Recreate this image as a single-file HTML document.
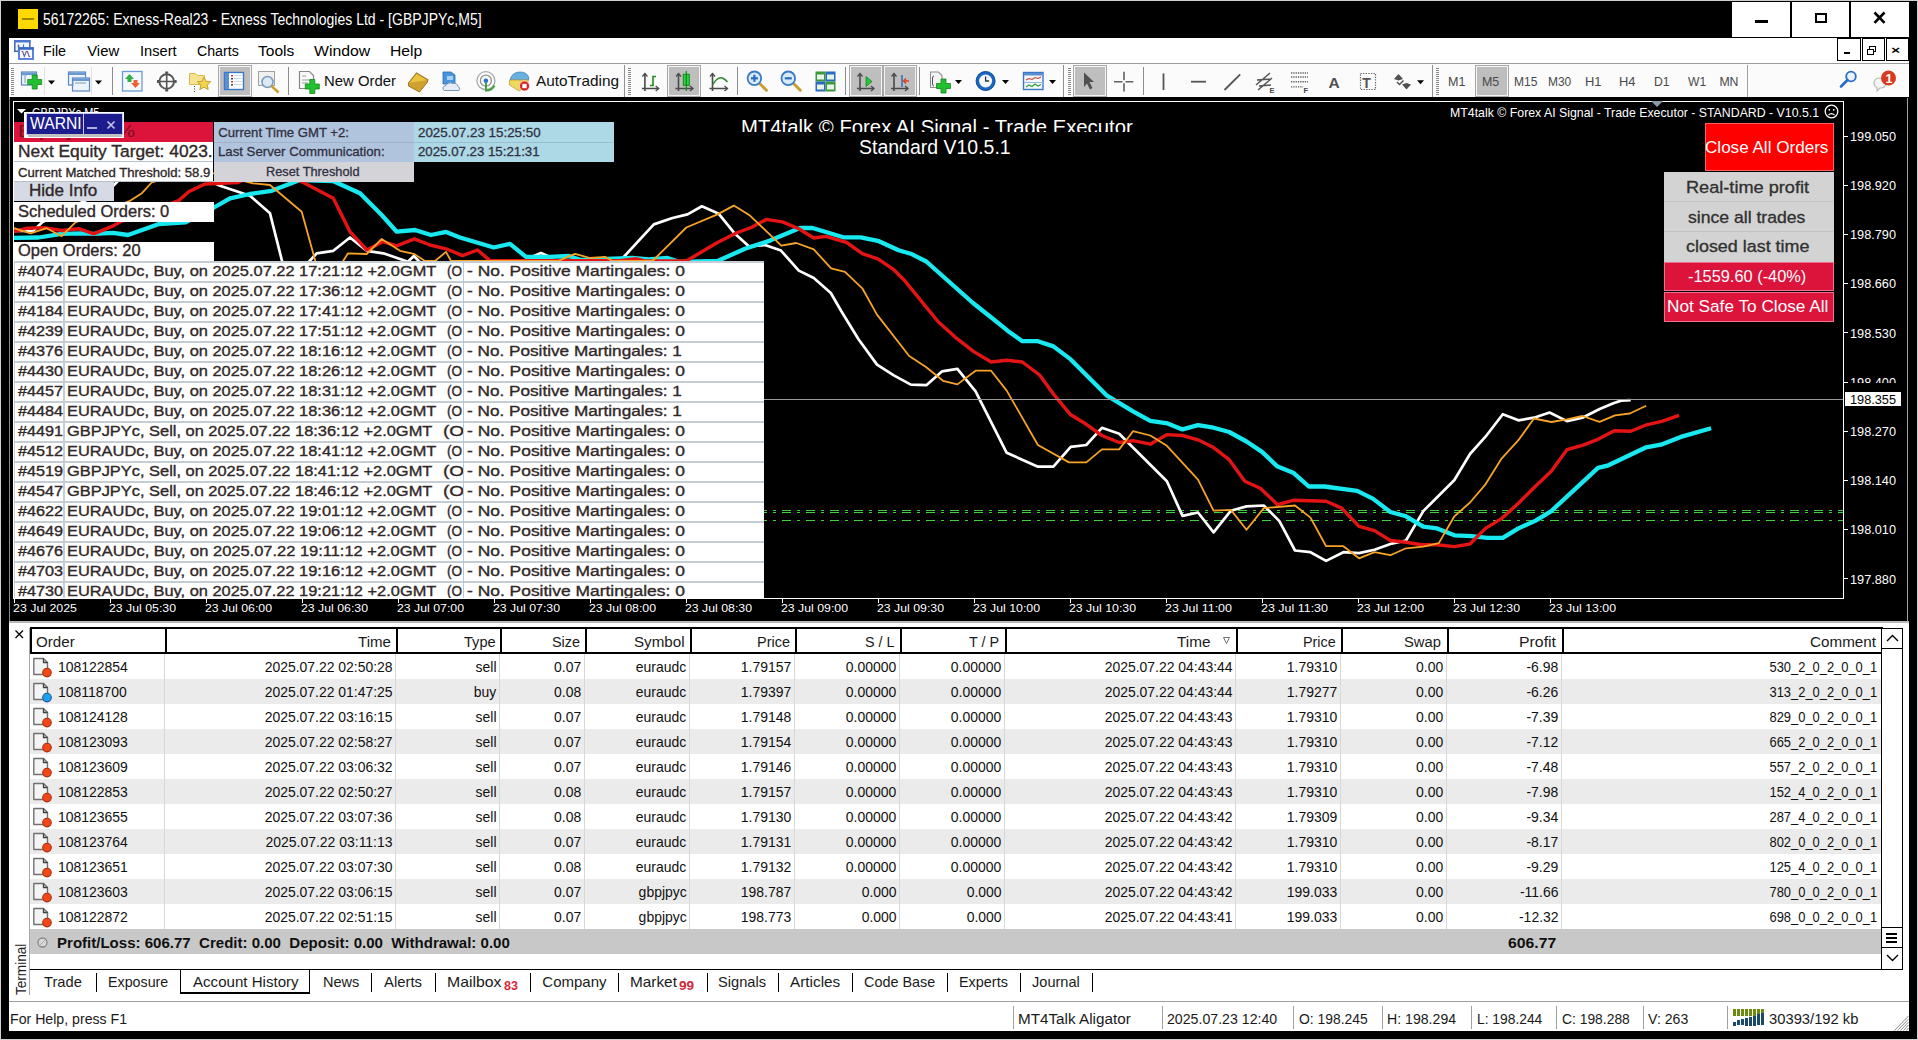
<!DOCTYPE html><html><head><meta charset="utf-8"><style>
*{margin:0;padding:0;box-sizing:border-box}
html,body{width:1918px;height:1040px;overflow:hidden;background:#000;position:relative}
body{font-family:"Liberation Sans",sans-serif;}
div{position:absolute}
.t{white-space:nowrap;line-height:1}
svg{position:absolute;overflow:visible}
</style></head><body>
<div style="left:0px;top:0px;width:1918px;height:1040px;background:#000;border:1px solid #d0d0d0"></div>
<div style="left:18px;top:9px;width:20px;height:20px;background:#ffd800"></div>
<div style="left:22px;top:18px;width:12px;height:2px;background:#9a8400"></div>
<div class="t" style="left:42.8px;top:12.0px;font-size:16.00px;color:#fff;font-weight:normal;font-family:'Liberation Sans';transform:scaleX(0.8765);transform-origin:0 0;">56172265: Exness-Real23 - Exness Technologies Ltd - [GBPJPYc,M5]</div>
<div style="left:1732px;top:2px;width:58px;height:35px;background:#fff"></div>
<div style="left:1792px;top:2px;width:57px;height:35px;background:#fff"></div>
<div style="left:1851px;top:2px;width:58px;height:35px;background:#fff"></div>
<div style="left:1755px;top:20px;width:13px;height:3px;background:#000"></div>
<div style="left:1815px;top:13px;width:12px;height:10px;border:2px solid #000"></div>
<svg style="left:1872px;top:11px" width="16" height="14"><path d="M2.5 1.5 L12.5 11.8 M12.5 1.5 L2.5 11.8" stroke="#000" stroke-width="2.6"/></svg>
<div style="left:9px;top:38px;width:1900px;height:25px;background:#fff"></div>
<div style="left:9px;top:63px;width:1900px;height:1px;background:#9c9c9c"></div>
<svg style="left:0;top:0" width="60" height="64"><rect x="14.8" y="40.8" width="15" height="10.5" fill="#f0f8ff" stroke="#4a6ab0" stroke-width="1.6"/><rect x="14" y="40" width="16.5" height="2.5" fill="#4a78d0"/><path d="M17.5 46 h2 M18.5 44.5 v3 M23.5 44.5 v4 h3" stroke="#4a6ab0" stroke-width="1.2" fill="none"/><rect x="19" y="48" width="14" height="11" fill="#f4faff" stroke="#4a78d8" stroke-width="1.8"/><rect x="18.3" y="47.3" width="15.5" height="2.5" fill="#3a68c8"/><path d="M21.5 51.5 h1.2 l1.6 5 l2 -5 h1.2 l1.6 5 h1" stroke="#6a5a9a" stroke-width="1.1" fill="none"/></svg>
<div class="t" style="left:42.9px;top:44.0px;font-size:14.86px;color:#000;font-weight:normal;font-family:'Liberation Sans';transform:scaleX(0.9620);transform-origin:0 0;">File</div>
<div class="t" style="left:87.2px;top:44.0px;font-size:14.86px;color:#000;font-weight:normal;font-family:'Liberation Sans';">View</div>
<div class="t" style="left:139.8px;top:44.0px;font-size:14.86px;color:#000;font-weight:normal;font-family:'Liberation Sans';transform:scaleX(0.9866);transform-origin:0 0;">Insert</div>
<div class="t" style="left:196.7px;top:44.0px;font-size:14.86px;color:#000;font-weight:normal;font-family:'Liberation Sans';transform:scaleX(0.9536);transform-origin:0 0;">Charts</div>
<div class="t" style="left:258.2px;top:44.0px;font-size:14.86px;color:#000;font-weight:normal;font-family:'Liberation Sans';transform:scaleX(1.0443);transform-origin:0 0;">Tools</div>
<div class="t" style="left:314.2px;top:44.0px;font-size:14.86px;color:#000;font-weight:normal;font-family:'Liberation Sans';transform:scaleX(1.0644);transform-origin:0 0;">Window</div>
<div class="t" style="left:390.2px;top:44.0px;font-size:14.86px;color:#000;font-weight:normal;font-family:'Liberation Sans';transform:scaleX(1.0554);transform-origin:0 0;">Help</div>
<div style="left:1837px;top:38px;width:24px;height:23px;background:#fff;border:1px solid #000"></div>
<div style="left:1862px;top:38px;width:23px;height:23px;background:#fff;border:1px solid #000"></div>
<div style="left:1886px;top:38px;width:23px;height:23px;background:#fff;border:1px solid #000"></div>
<div style="left:1844px;top:52px;width:6px;height:2px;background:#000"></div>
<div style="left:1869px;top:46px;width:7px;height:6px;border:1.5px solid #000"></div>
<div style="left:1867px;top:49px;width:7px;height:6px;border:1.5px solid #000;background:#fff"></div>
<div class="t" style="left:1891.2px;top:46.0px;font-size:10.00px;color:#000;font-weight:bold;font-family:'Liberation Sans';transform:scaleX(1.5861);transform-origin:0 0;">×</div>
<div style="left:9px;top:64px;width:1900px;height:33px;background:#fbfbfb"></div>
<svg style="left:0;top:0" width="1918" height="100"><rect x="11" y="68" width="3" height="1" fill="#8a8a8a"/><rect x="11" y="70" width="3" height="1" fill="#8a8a8a"/><rect x="11" y="72" width="3" height="1" fill="#8a8a8a"/><rect x="11" y="74" width="3" height="1" fill="#8a8a8a"/><rect x="11" y="76" width="3" height="1" fill="#8a8a8a"/><rect x="11" y="78" width="3" height="1" fill="#8a8a8a"/><rect x="11" y="80" width="3" height="1" fill="#8a8a8a"/><rect x="11" y="82" width="3" height="1" fill="#8a8a8a"/><rect x="11" y="84" width="3" height="1" fill="#8a8a8a"/><rect x="11" y="86" width="3" height="1" fill="#8a8a8a"/><rect x="11" y="88" width="3" height="1" fill="#8a8a8a"/><rect x="11" y="90" width="3" height="1" fill="#8a8a8a"/><rect x="11" y="92" width="3" height="1" fill="#8a8a8a"/><rect x="11" y="94" width="3" height="1" fill="#8a8a8a"/><rect x="21.5" y="72.0" width="15" height="13" fill="#eef4fc" stroke="#5a88c4" stroke-width="1.2"/><rect x="22" y="72.5" width="14" height="2.5" fill="#6a9ad4"/><path d="M25 74 v9 M23.5 75.5 l1.5 -1.5 l1.5 1.5" stroke="#7a9ac0" fill="none" stroke-width="1"/><path d="M32.2 75 h5 v4.5 h4.5 v5 h-4.5 v4.5 h-5 v-4.5 h-4.5 v-5 h4.5 z" fill="#22c030" stroke="#108a18" stroke-width="0.8"/><rect x="44" y="67" width="1" height="28" fill="#e0e0e0"/><path d="M48 80.5 h7 l-3.5 4 z" fill="#000"/><rect x="68.5" y="72.0" width="17" height="13" fill="#eef4fc" stroke="#5a88c4" stroke-width="1.2"/><rect x="69" y="72.5" width="16" height="2.5" fill="#6a9ad4"/><rect x="72.5" y="78.0" width="17" height="13" fill="#eef4fc" stroke="#5a88c4" stroke-width="1.2"/><rect x="73" y="78.5" width="16" height="2.5" fill="#6a9ad4"/><path d="M75 83 h11 M73 81 v5" stroke="#7a9ac0" stroke-width="1"/><rect x="91" y="67" width="1" height="28" fill="#e0e0e0"/><path d="M95 80.5 h7 l-3.5 4 z" fill="#000"/><rect x="112" y="67" width="1" height="28" fill="#8c8c8c"/><rect x="122.5" y="71.5" width="19.5" height="19.5" fill="#f4f8fc" stroke="#6a9ad4" stroke-width="1.3"/><path d="M125 79 l4.5 -5 l4.5 5 h-2.5 v3 h-4 v-3 z" fill="#30b040"/><path d="M131 83 h2.5 v-3 h4 v3 h2.5 l-4.5 5 z" fill="#f06030"/><circle cx="166.7" cy="81.5" r="7.3" fill="none" stroke="#555" stroke-width="2"/><path d="M166.7 72 v19 M157 81.5 h19.5" stroke="#555" stroke-width="1.6"/><rect x="165.2" y="71.5" width="3" height="2" fill="#555"/><rect x="165.2" y="89.5" width="3" height="2" fill="#555"/><rect x="157" y="80" width="2" height="3" fill="#555"/><rect x="174.5" y="80" width="2" height="3" fill="#555"/><path d="M189.5 73.5 h6 l2 2 h7 v9 h-15 z" fill="#f6e290" stroke="#d8b850" stroke-width="1"/><path d="M204 77 l2 4.3 l4.7 0.5 l-3.5 3.2 l1 4.6 l-4.2 -2.4 l-4.2 2.4 l1 -4.6 l-3.5 -3.2 l4.7 -0.5 z" fill="#f2d44a" stroke="#b89a30" stroke-width="0.9"/><path d="M194.5 86 v6" stroke="#444" stroke-width="1" stroke-dasharray="1 1.5"/><rect x="219.5" y="66.5" width="31" height="29" fill="#bebebe" stroke="#f4f4f4" stroke-width="1"/><rect x="218.5" y="65.5" width="33" height="31" fill="none" stroke="#a8a8a8" stroke-width="1"/><rect x="224.5" y="72.5" width="19" height="17" fill="#fff" stroke="#3a78c8" stroke-width="1.4"/><rect x="225" y="73" width="4" height="16" fill="#5a90d0"/><rect x="231" y="75" width="2" height="1.5" fill="#d03030"/><rect x="234" y="75" width="8" height="1" fill="#c8d8ec"/><rect x="231" y="78" width="2" height="1.5" fill="#404040"/><rect x="234" y="78" width="8" height="1" fill="#c8d8ec"/><rect x="231" y="81" width="2" height="1.5" fill="#d03030"/><rect x="234" y="81" width="8" height="1" fill="#c8d8ec"/><rect x="231" y="84" width="2" height="1.5" fill="#404040"/><rect x="234" y="84" width="8" height="1" fill="#c8d8ec"/><rect x="258.5" y="71.5" width="16" height="14" fill="#f0f0f0" stroke="#a0a0a0" stroke-width="1"/><circle cx="267.5" cy="82" r="5.5" fill="#dce8f4" stroke="#7a9ac0" stroke-width="1.5"/><path d="M271.5 86 l7 6.5" stroke="#c8a030" stroke-width="2.5"/><rect x="288" y="67" width="1" height="28" fill="#8c8c8c"/><path d="M299.5 71.5 h10 l4 4 v13 h-14 z" fill="#fafafa" stroke="#888" stroke-width="1.2"/><path d="M302 76 h4 M302 80 h8 M302 83 h6" stroke="#999" stroke-width="1.2"/><path d="M309.8 79.5 h5 v4.5 h4.5 v5 h-4.5 v4.5 h-5 v-4.5 h-4.5 v-5 h4.5 z" fill="#22c030" stroke="#108a18" stroke-width="0.8"/><path d="M408.5 83 l8 -10 l11.5 7 l-8 10.5 z" fill="#e8c440" stroke="#a07820" stroke-width="1.1"/><path d="M408.5 83 l0 3 l11 6 l8 -10 l0 -2" fill="#d0a030" stroke="#a07820" stroke-width="1"/><path d="M443 72 h8 l4 3 v9 h-12 z" fill="#4a94dc" stroke="#2a6ab0" stroke-width="0.8"/><rect x="447" y="76" width="6" height="4" fill="#a8d0f4"/><path d="M444 90.5 q-3 -4 2 -5 q2 -4 7 -2 q4 -1 5 3 q3 1 1 4 z" fill="#e4ecf4" stroke="#7a98b8" stroke-width="1"/><circle cx="485.9" cy="80.7" r="9" fill="none" stroke="#a8a8a8" stroke-width="1.3"/><circle cx="485.9" cy="80.7" r="5.5" fill="none" stroke="#909090" stroke-width="1.3"/><circle cx="485.9" cy="80.7" r="2.3" fill="#2a70c8"/><path d="M486 83 v7.5 q6 0 8.5 -5" fill="none" stroke="#40a040" stroke-width="2"/><path d="M510 80 q2 -8 10 -8 q8 0 9 7 l-1 1 z" fill="#6ab0e0" stroke="#3a80b8" stroke-width="0.8"/><path d="M509.5 80 h19 l-3 7 l-6.5 4 l-9.5 -6 z" fill="#f0d860" stroke="#c0a030" stroke-width="0.8"/><circle cx="524.5" cy="86" r="5" fill="#d82020" stroke="#fff" stroke-width="0.6"/><rect x="522.3" y="83.8" width="4.4" height="4.4" fill="#fff"/><rect x="624" y="65" width="1" height="32" fill="#909090"/><rect x="628" y="68" width="3" height="1" fill="#8a8a8a"/><rect x="628" y="70" width="3" height="1" fill="#8a8a8a"/><rect x="628" y="72" width="3" height="1" fill="#8a8a8a"/><rect x="628" y="74" width="3" height="1" fill="#8a8a8a"/><rect x="628" y="76" width="3" height="1" fill="#8a8a8a"/><rect x="628" y="78" width="3" height="1" fill="#8a8a8a"/><rect x="628" y="80" width="3" height="1" fill="#8a8a8a"/><rect x="628" y="82" width="3" height="1" fill="#8a8a8a"/><rect x="628" y="84" width="3" height="1" fill="#8a8a8a"/><rect x="628" y="86" width="3" height="1" fill="#8a8a8a"/><rect x="628" y="88" width="3" height="1" fill="#8a8a8a"/><rect x="628" y="90" width="3" height="1" fill="#8a8a8a"/><rect x="628" y="92" width="3" height="1" fill="#8a8a8a"/><rect x="628" y="94" width="3" height="1" fill="#8a8a8a"/><path d="M644.9 73.5 v17.5 M641.9 88.5 h16.800000000000068" stroke="#4a4a4a" stroke-width="1.6" fill="none"/><path d="M642.4 76.5 l2.5 -3 l2.5 3 M655.7 86 l3 2.5 l-3 2.5" stroke="#4a4a4a" stroke-width="1.3" fill="none"/><path d="M650 85.5 h3 v-9 h3" stroke="#208a20" stroke-width="1.6" fill="none"/><rect x="668.5" y="66.5" width="31" height="29" fill="#bebebe" stroke="#f4f4f4" stroke-width="1"/><rect x="667.5" y="65.5" width="33" height="31" fill="none" stroke="#a8a8a8" stroke-width="1"/><path d="M678.5 73.5 v17.5 M675.5 88.5 h17.5" stroke="#4a4a4a" stroke-width="1.6" fill="none"/><path d="M676.0 76.5 l2.5 -3 l2.5 3 M690 86 l3 2.5 l-3 2.5" stroke="#4a4a4a" stroke-width="1.3" fill="none"/><rect x="683.3" y="74.3" width="6" height="11" fill="#30d040" stroke="#108a18" stroke-width="1"/><path d="M686.3 71 v20" stroke="#108a18" stroke-width="1.2"/><path d="M712.5 73.5 v17.5 M709.5 88.5 h18.0" stroke="#4a4a4a" stroke-width="1.6" fill="none"/><path d="M710.0 76.5 l2.5 -3 l2.5 3 M724.5 86 l3 2.5 l-3 2.5" stroke="#4a4a4a" stroke-width="1.3" fill="none"/><path d="M712.5 85 q5 -9 10 -7 q3 1.5 5 4" stroke="#308a30" stroke-width="1.5" fill="none"/><rect x="737" y="67" width="1" height="28" fill="#8c8c8c"/><path d="M759.4 83.3 l7 7" stroke="#c8a030" stroke-width="3" stroke-linecap="round"/><circle cx="754.4" cy="78.3" r="6.8" fill="#d8ecfc" stroke="#3a7ac8" stroke-width="1.8"/><path d="M750.9 78.3 h7" stroke="#2a6ab8" stroke-width="2.2"/><path d="M754.4 74.8 v7" stroke="#2a6ab8" stroke-width="2.2"/><path d="M793.3 83.3 l7 7" stroke="#c8a030" stroke-width="3" stroke-linecap="round"/><circle cx="788.3" cy="78.3" r="6.8" fill="#d8ecfc" stroke="#3a7ac8" stroke-width="1.8"/><path d="M784.8 78.3 h7" stroke="#2a6ab8" stroke-width="2.2"/><rect x="815.5" y="71.5" width="10" height="10" fill="#3a9a3a"/><rect x="817.0" y="74.5" width="7" height="5" fill="#e8f4e8"/><rect x="825.5" y="71.5" width="10" height="10" fill="#2a6ac0"/><rect x="827.0" y="74.5" width="7" height="5" fill="#e8f4e8"/><rect x="815.5" y="81.5" width="10" height="10" fill="#2a6ac0"/><rect x="817.0" y="84.5" width="7" height="5" fill="#e8f4e8"/><rect x="825.5" y="81.5" width="10" height="10" fill="#3a9a3a"/><rect x="827.0" y="84.5" width="7" height="5" fill="#e8f4e8"/><rect x="845" y="67" width="1" height="28" fill="#8c8c8c"/><rect x="850.5" y="66.5" width="31" height="29" fill="#bebebe" stroke="#f4f4f4" stroke-width="1"/><rect x="849.5" y="65.5" width="33" height="31" fill="none" stroke="#a8a8a8" stroke-width="1"/><path d="M860 73.5 v17.5 M857 88.5 h17" stroke="#4a4a4a" stroke-width="1.6" fill="none"/><path d="M857.5 76.5 l2.5 -3 l2.5 3 M871 86 l3 2.5 l-3 2.5" stroke="#4a4a4a" stroke-width="1.3" fill="none"/><path d="M866 76.5 l6 5 l-6 5 z" fill="#30c040" stroke="#108a18" stroke-width="0.8"/><rect x="884.5" y="66.5" width="31" height="29" fill="#bebebe" stroke="#f4f4f4" stroke-width="1"/><rect x="883.5" y="65.5" width="33" height="31" fill="none" stroke="#a8a8a8" stroke-width="1"/><path d="M894 73.5 v17.5 M891 88.5 h17" stroke="#4a4a4a" stroke-width="1.6" fill="none"/><path d="M891.5 76.5 l2.5 -3 l2.5 3 M905 86 l3 2.5 l-3 2.5" stroke="#4a4a4a" stroke-width="1.3" fill="none"/><path d="M902 75 v12" stroke="#2a70c0" stroke-width="1.5"/><path d="M909 81 h-5 M906 78.5 l-2.5 2.5 l2.5 2.5" stroke="#e04020" stroke-width="1.5" fill="none"/><rect x="919" y="67" width="1" height="28" fill="#8c8c8c"/><path d="M930.5 72 h8 l3.5 3.5 v12 h-11.5 z" fill="#f4f4f4" stroke="#909090" stroke-width="1.1"/><path d="M934 76 q-1.5 0 -1.5 2 v6 q0 2 1.5 2" stroke="#555" stroke-width="1" fill="none"/><path d="M941.0 79 h5 v4.5 h4.5 v5 h-4.5 v4.5 h-5 v-4.5 h-4.5 v-5 h4.5 z" fill="#22c030" stroke="#108a18" stroke-width="0.8"/><path d="M955 80 h7 l-3.5 4 z" fill="#000"/><circle cx="985.6" cy="81" r="9.5" fill="#1a66c0" stroke="#0a4a98" stroke-width="1"/><circle cx="985.6" cy="81" r="6.5" fill="#f4f8fc"/><path d="M985.6 76.5 v4.5 h3.5" stroke="#333" stroke-width="1.3" fill="none"/><path d="M1002 80 h7 l-3.5 4 z" fill="#000"/><rect x="1023.5" y="72.5" width="19.5" height="17" fill="#f4f8fc" stroke="#3a78c8" stroke-width="1.4"/><rect x="1024" y="73" width="19" height="2.5" fill="#5a90d0"/><path d="M1026 80 l3 -1.5 l3 1 l3 -2 l3 1 l3 -1.5" stroke="#c04020" fill="none" stroke-width="1.1"/><path d="M1024 82.5 h19" stroke="#9ab8dc"/><path d="M1026 87 l3 -2 l3 1.5 l3 -2.5 l3 2 l3 -1.5" stroke="#30a030" fill="none" stroke-width="1.1"/><path d="M1049 80 h7 l-3.5 4 z" fill="#000"/><rect x="1063" y="65" width="1" height="32" fill="#909090"/><rect x="1068" y="68" width="3" height="1" fill="#8a8a8a"/><rect x="1068" y="70" width="3" height="1" fill="#8a8a8a"/><rect x="1068" y="72" width="3" height="1" fill="#8a8a8a"/><rect x="1068" y="74" width="3" height="1" fill="#8a8a8a"/><rect x="1068" y="76" width="3" height="1" fill="#8a8a8a"/><rect x="1068" y="78" width="3" height="1" fill="#8a8a8a"/><rect x="1068" y="80" width="3" height="1" fill="#8a8a8a"/><rect x="1068" y="82" width="3" height="1" fill="#8a8a8a"/><rect x="1068" y="84" width="3" height="1" fill="#8a8a8a"/><rect x="1068" y="86" width="3" height="1" fill="#8a8a8a"/><rect x="1068" y="88" width="3" height="1" fill="#8a8a8a"/><rect x="1068" y="90" width="3" height="1" fill="#8a8a8a"/><rect x="1068" y="92" width="3" height="1" fill="#8a8a8a"/><rect x="1068" y="94" width="3" height="1" fill="#8a8a8a"/><rect x="1074.5" y="66.5" width="31" height="29" fill="#bebebe" stroke="#f4f4f4" stroke-width="1"/><rect x="1073.5" y="65.5" width="33" height="31" fill="none" stroke="#a8a8a8" stroke-width="1"/><path d="M1084 72.5 l10 9.5 h-4.5 l3 6 l-2.5 1.5 l-3 -6 l-3 3.5 z" fill="#505050"/><path d="M1124 71.8 v19.8 M1114 81.7 h19.3" stroke="#606060" stroke-width="1.6"/><rect x="1122.5" y="80.2" width="3" height="3" fill="#fbfbfb"/><rect x="1143" y="67" width="1" height="28" fill="#8c8c8c"/><path d="M1163.5 73.4 v16.6" stroke="#555" stroke-width="1.8"/><path d="M1191 81.7 h15" stroke="#555" stroke-width="1.8"/><path d="M1224.5 90 l15.7 -15.6" stroke="#555" stroke-width="1.8"/><path d="M1256 85 l14 -12 M1258 90 l14 -12 M1257 80 l14 -1 M1259 86 l12 -1" stroke="#555" stroke-width="1.5"/><text x="1269.5" y="92.5" font-family="Liberation Sans" font-weight="bold" font-size="7.5" fill="#444">E</text><path d="M1291 73 h17" stroke="#606060" stroke-width="1.4" stroke-dasharray="1.3 1"/><path d="M1291 77 h17" stroke="#606060" stroke-width="1.4" stroke-dasharray="1.3 1"/><path d="M1291 81.7 h17" stroke="#606060" stroke-width="1.4" stroke-dasharray="1.3 1"/><path d="M1291 86.9 h12" stroke="#606060" stroke-width="1.4" stroke-dasharray="1.3 1"/><text x="1303.5" y="92.5" font-family="Liberation Sans" font-weight="bold" font-size="7.5" fill="#444">F</text><text x="1328.5" y="87.5" font-family="Liberation Sans" font-weight="bold" font-size="15.5" fill="#505050">A</text><rect x="1360.5" y="73.5" width="15" height="16" fill="none" stroke="#606060" stroke-width="1.2" stroke-dasharray="1.3 1.3"/><text x="1362.3" y="87.5" font-family="Liberation Sans" font-weight="bold" font-size="14" fill="#555">T</text><path d="M1394 79 l4.5 -5 l4.5 5 l-4.5 1.5 z" fill="#505050"/><path d="M1402 84.5 l4.5 5 l4.5 -5 l-4.5 -1.5 z" fill="#505050"/><path d="M1397 82 l2.5 2.5 l4 -4" stroke="#505050" stroke-width="1.5" fill="none"/><path d="M1417 80.2 h7 l-3.5 4 z" fill="#000"/><rect x="1432" y="65" width="1" height="32" fill="#909090"/><rect x="1436" y="68" width="3" height="1" fill="#8a8a8a"/><rect x="1436" y="70" width="3" height="1" fill="#8a8a8a"/><rect x="1436" y="72" width="3" height="1" fill="#8a8a8a"/><rect x="1436" y="74" width="3" height="1" fill="#8a8a8a"/><rect x="1436" y="76" width="3" height="1" fill="#8a8a8a"/><rect x="1436" y="78" width="3" height="1" fill="#8a8a8a"/><rect x="1436" y="80" width="3" height="1" fill="#8a8a8a"/><rect x="1436" y="82" width="3" height="1" fill="#8a8a8a"/><rect x="1436" y="84" width="3" height="1" fill="#8a8a8a"/><rect x="1436" y="86" width="3" height="1" fill="#8a8a8a"/><rect x="1436" y="88" width="3" height="1" fill="#8a8a8a"/><rect x="1436" y="90" width="3" height="1" fill="#8a8a8a"/><rect x="1436" y="92" width="3" height="1" fill="#8a8a8a"/><rect x="1436" y="94" width="3" height="1" fill="#8a8a8a"/><rect x="1476.5" y="66.5" width="31" height="29" fill="#bebebe" stroke="#f4f4f4" stroke-width="1"/><rect x="1475.5" y="65.5" width="33" height="31" fill="none" stroke="#a8a8a8" stroke-width="1"/><rect x="1747" y="65" width="1" height="32" fill="#a0a0a0"/><circle cx="1851" cy="76.5" r="4.8" fill="#eaf2fc" stroke="#2a6ac8" stroke-width="1.8"/><path d="M1847.5 80 l-6.5 6.5" stroke="#2a6ac8" stroke-width="2.6" stroke-linecap="round"/><path d="M1874 83 q0 -5 6 -5 q6 0 6 5 q0 5 -6 5 l-3 3 v-3.5 q-3 -1 -3 -4.5z" fill="#f4f4f4" stroke="#b8b8b8" stroke-width="1.1"/><circle cx="1888.5" cy="78" r="7.5" fill="#d83a20"/><text x="1885.5" y="83" font-family="Liberation Sans" font-weight="bold" font-size="12.5" fill="#fff">1</text></svg>
<div class="t" style="left:323.9px;top:73.0px;font-size:15.00px;color:#101010;font-weight:normal;font-family:'Liberation Sans';transform:scaleX(0.9926);transform-origin:0 0;">New Order</div>
<div class="t" style="left:535.7px;top:73.0px;font-size:15.00px;color:#101010;font-weight:normal;font-family:'Liberation Sans';transform:scaleX(1.0229);transform-origin:0 0;">AutoTrading</div>
<div class="t" style="left:1448.3px;top:76.0px;font-size:12.29px;color:#4a4a4a;font-weight:normal;font-family:'Liberation Sans';transform:scaleX(1.0199);transform-origin:0 0;">M1</div>
<div class="t" style="left:1481.9px;top:76.0px;font-size:12.29px;color:#4a4a4a;font-weight:normal;font-family:'Liberation Sans';transform:scaleX(1.0137);transform-origin:0 0;">M5</div>
<div class="t" style="left:1513.7px;top:76.0px;font-size:12.29px;color:#4a4a4a;font-weight:normal;font-family:'Liberation Sans';transform:scaleX(0.9772);transform-origin:0 0;">M15</div>
<div class="t" style="left:1548.2px;top:76.0px;font-size:12.29px;color:#4a4a4a;font-weight:normal;font-family:'Liberation Sans';transform:scaleX(0.9728);transform-origin:0 0;">M30</div>
<div class="t" style="left:1585.2px;top:76.0px;font-size:12.29px;color:#4a4a4a;font-weight:normal;font-family:'Liberation Sans';transform:scaleX(1.0530);transform-origin:0 0;">H1</div>
<div class="t" style="left:1618.7px;top:76.0px;font-size:12.29px;color:#4a4a4a;font-weight:normal;font-family:'Liberation Sans';transform:scaleX(1.0530);transform-origin:0 0;">H4</div>
<div class="t" style="left:1654.0px;top:76.0px;font-size:12.29px;color:#4a4a4a;font-weight:normal;font-family:'Liberation Sans';transform:scaleX(0.9918);transform-origin:0 0;">D1</div>
<div class="t" style="left:1687.6px;top:76.0px;font-size:12.29px;color:#4a4a4a;font-weight:normal;font-family:'Liberation Sans';transform:scaleX(0.9863);transform-origin:0 0;">W1</div>
<div class="t" style="left:1719.4px;top:76.0px;font-size:12.29px;color:#4a4a4a;font-weight:normal;font-family:'Liberation Sans';">MN</div>
<div style="left:9px;top:97px;width:1900px;height:524px;background:#000"></div>
<div style="left:9px;top:97px;width:1px;height:524px;background:#8a8a8a"></div>
<div style="left:1907px;top:98px;width:1px;height:523px;background:#a0a0a0"></div>
<div style="left:9px;top:621px;width:1900px;height:2px;background:#b8b8b8"></div>
<div style="left:13px;top:101px;width:1831px;height:498px;border:1px solid #fff;border-right:none"></div>
<div style="left:1843px;top:101px;width:1px;height:498px;background:#fff"></div>
<svg style="left:0;top:0" width="1918" height="1040"><line x1="764" y1="510.5" x2="1843" y2="510.5" stroke="#3cd23c" stroke-width="1" stroke-dasharray="9 6 3 6" stroke-dashoffset="6"/><line x1="764" y1="512.5" x2="1843" y2="512.5" stroke="#3cd23c" stroke-width="1" stroke-dasharray="9 6 3 6" stroke-dashoffset="6"/><line x1="764" y1="520.5" x2="1843" y2="520.5" stroke="#3cd23c" stroke-width="1" stroke-dasharray="9 6 3 6" stroke-dashoffset="6"/><polyline points="14.0,231.0 33.0,231.0 42.0,222.4 112.0,187.0 120.0,179.0 205.0,177.0 214.0,183.0 220.0,185.8 250.0,195.8 270.0,213.3 283.3,266.0 305.0,266.0 316.7,253.3 333.3,250.8 350.0,237.5 366.7,250.8 383.3,253.3 408.0,261.7 413.8,256.0 418.8,261.0 425.0,266.0 527.0,266.0 533.8,256.0 541.0,253.0 550.0,257.0 557.0,266.0 614.0,266.0 620.0,261.0 653.8,224.4 672.5,218.0 687.5,214.4 701.9,206.3 718.8,213.8 735.0,233.8 748.8,246.3 765.0,245.0 781.0,250.6 798.8,270.6 813.8,278.0 830.8,293.0 841.5,311.5 858.5,339.2 877.0,364.6 893.8,375.4 910.8,384.6 926.3,385.2 941.9,371.4 957.4,368.8 975.6,391.4 1006.7,452.8 1037.9,466.7 1053.4,466.7 1070.7,446.8 1086.3,445.0 1101.9,427.8 1119.2,433.8 1166.9,481.3 1182.5,515.9 1198.0,512.5 1213.6,532.4 1230.9,510.7 1246.5,506.4 1263.8,505.5 1279.4,521.1 1295.0,550.5 1310.5,552.2 1326.1,560.9 1343.4,552.2 1359.0,553.1 1374.5,549.7 1391.8,543.6 1406.0,540.5 1423.3,511.1 1454.4,480.0 1470.0,454.0 1485.5,436.7 1502.8,414.2 1518.4,420.3 1534.0,417.7 1549.6,412.5 1566.9,421.1 1582.4,417.7 1599.7,409.0 1613.4,403.2 1621.1,400.6 1630.7,400.1" fill="none" stroke="#ffffff" stroke-width="2.7" stroke-linejoin="round"/><polyline points="14.0,237.9 38.7,237.5 61.6,233.9 81.0,233.3 93.7,233.9 113.0,232.8 128.0,235.0 159.0,224.0 185.5,222.4 214.0,207.5 230.0,198.3 250.0,194.0 271.7,190.8 286.7,185.0 300.0,180.0 333.0,181.0 360.0,193.3 381.7,215.0 396.7,231.7 415.0,230.0 431.0,235.0 446.0,231.9 460.0,237.5 493.8,247.5 510.0,243.8 526.0,256.9 550.0,256.9 568.8,256.0 581.0,260.0 632.5,258.0 648.8,259.4 667.5,258.0 680.0,262.0 717.5,261.0 745.0,248.8 770.0,240.6 800.0,228.0 812.5,228.0 843.3,237.3 860.6,237.3 877.9,240.8 898.6,250.3 910.7,253.7 926.3,261.5 973.0,303.0 993.8,319.5 1007.6,330.7 1022.3,341.2 1037.9,341.2 1053.4,346.4 1070.7,359.4 1107.0,395.7 1133.0,411.3 1150.3,420.8 1167.6,423.4 1182.5,429.4 1198.0,425.1 1213.6,427.7 1229.2,432.0 1246.5,441.5 1262.0,451.9 1277.6,466.6 1293.2,472.7 1308.8,486.5 1324.4,486.5 1357.2,490.8 1372.8,498.6 1390.4,512.0 1406.0,516.3 1423.3,526.7 1437.1,528.4 1454.4,535.3 1471.7,536.2 1487.3,537.9 1502.8,537.9 1518.4,528.4 1535.7,520.6 1551.3,511.1 1598.0,467.9 1608.4,465.3 1646.2,447.3 1660.9,444.7 1680.8,436.9 1711.1,428.3" fill="none" stroke="#18e8f0" stroke-width="4.3" stroke-linejoin="round"/><polyline points="14.0,231.6 27.2,228.2 44.4,227.6 61.6,230.5 78.8,228.7 93.7,233.9 113.2,225.9 120.0,222.0 178.6,200.6 189.0,191.5 205.0,184.0 238.0,182.5 250.0,177.0 290.0,177.0 303.3,182.5 333.3,198.3 350.0,231.7 366.7,250.0 383.0,241.7 396.7,245.8 414.4,238.8 430.0,245.0 446.0,248.8 462.5,255.6 477.5,250.0 490.0,260.6 521.0,260.6 620.0,260.6 636.3,258.8 645.0,261.0 686.3,261.0 717.5,242.5 736.3,233.0 751.3,227.5 766.3,219.4 782.5,221.9 798.8,228.8 813.8,238.0 826.0,236.4 846.7,242.5 862.3,253.7 877.9,258.9 893.4,269.3 903.8,279.7 938.4,322.0 955.7,337.6 973.8,351.6 991.1,362.0 1006.7,360.3 1022.3,362.0 1039.6,375.0 1053.4,394.0 1070.7,414.8 1086.3,424.3 1101.9,435.5 1119.2,442.5 1133.0,440.7 1150.3,444.2 1166.9,434.6 1182.5,435.5 1198.0,439.8 1213.6,447.6 1229.2,459.7 1244.8,481.3 1260.3,488.2 1277.6,504.7 1293.2,500.3 1326.1,501.2 1341.7,508.1 1359.0,526.3 1374.5,530.6 1390.4,540.5 1406.0,542.2 1421.5,544.8 1437.1,544.8 1454.4,546.6 1470.0,544.0 1485.5,528.4 1501.1,518.9 1518.4,503.3 1535.7,486.0 1551.3,471.3 1566.9,449.7 1582.4,445.4 1598.0,439.3 1614.2,430.8 1630.7,431.3 1645.4,425.2 1661.8,421.3 1679.1,415.3" fill="none" stroke="#e41414" stroke-width="3.4" stroke-linejoin="round"/><polyline points="14.0,228.2 30.6,233.3 46.7,228.2 61.6,236.2 75.4,222.4 129.3,201.2 141.9,193.2 151.7,182.5 200.0,170.0 253.0,183.3 270.0,185.0 301.7,211.7 316.7,266.0 340.0,266.0 348.0,253.3 366.7,254.0 381.7,239.0 400.0,250.8 413.8,253.8 425.0,261.0 435.0,261.0 446.0,251.9 451.0,261.0 558.8,260.6 575.0,253.8 590.0,258.0 605.0,256.9 612.5,261.0 652.5,261.0 686.3,227.5 717.5,214.4 733.8,205.6 750.0,215.6 781.3,245.6 796.3,243.0 813.8,249.4 831.1,268.4 845.0,271.9 862.3,288.3 877.0,314.6 909.2,356.0 926.0,367.0 943.0,380.8 957.4,384.4 975.6,370.7 991.1,370.7 1006.7,390.6 1037.9,445.0 1069.0,462.4 1086.3,462.4 1101.9,449.4 1119.2,449.4 1133.0,431.2 1150.3,435.5 1166.9,445.8 1198.0,479.6 1213.6,510.7 1230.9,509.9 1246.5,529.8 1263.8,508.1 1295.0,505.5 1310.5,517.6 1326.1,546.2 1343.4,546.2 1359.0,558.3 1374.5,552.2 1390.4,555.2 1406.0,548.3 1423.3,546.6 1438.8,543.1 1454.4,516.3 1470.0,502.5 1485.5,484.3 1501.1,459.2 1518.4,440.2 1534.0,418.5 1551.3,422.0 1566.9,419.4 1582.4,416.0 1599.5,421.8 1615.1,415.3 1629.8,413.5 1646.2,405.8" fill="none" stroke="#f6a326" stroke-width="1.8" stroke-linejoin="round"/></svg>
<div style="left:14px;top:598px;width:1px;height:5px;background:#fff"></div>
<div class="t" style="left:12.9px;top:603.0px;font-size:11.57px;color:#fff;font-weight:normal;font-family:'Liberation Sans';transform:scaleX(1.0701);transform-origin:0 0;">23 Jul 2025</div>
<div style="left:110px;top:598px;width:1px;height:5px;background:#fff"></div>
<div class="t" style="left:108.9px;top:603.0px;font-size:11.57px;color:#fff;font-weight:normal;font-family:'Liberation Sans';transform:scaleX(1.0630);transform-origin:0 0;">23 Jul 05:30</div>
<div style="left:206px;top:598px;width:1px;height:5px;background:#fff"></div>
<div class="t" style="left:204.9px;top:603.0px;font-size:11.57px;color:#fff;font-weight:normal;font-family:'Liberation Sans';transform:scaleX(1.0630);transform-origin:0 0;">23 Jul 06:00</div>
<div style="left:302px;top:598px;width:1px;height:5px;background:#fff"></div>
<div class="t" style="left:300.9px;top:603.0px;font-size:11.57px;color:#fff;font-weight:normal;font-family:'Liberation Sans';transform:scaleX(1.0630);transform-origin:0 0;">23 Jul 06:30</div>
<div style="left:398px;top:598px;width:1px;height:5px;background:#fff"></div>
<div class="t" style="left:396.9px;top:603.0px;font-size:11.57px;color:#fff;font-weight:normal;font-family:'Liberation Sans';transform:scaleX(1.0630);transform-origin:0 0;">23 Jul 07:00</div>
<div style="left:494px;top:598px;width:1px;height:5px;background:#fff"></div>
<div class="t" style="left:492.9px;top:603.0px;font-size:11.57px;color:#fff;font-weight:normal;font-family:'Liberation Sans';transform:scaleX(1.0630);transform-origin:0 0;">23 Jul 07:30</div>
<div style="left:590px;top:598px;width:1px;height:5px;background:#fff"></div>
<div class="t" style="left:588.9px;top:603.0px;font-size:11.57px;color:#fff;font-weight:normal;font-family:'Liberation Sans';transform:scaleX(1.0630);transform-origin:0 0;">23 Jul 08:00</div>
<div style="left:686px;top:598px;width:1px;height:5px;background:#fff"></div>
<div class="t" style="left:684.9px;top:603.0px;font-size:11.57px;color:#fff;font-weight:normal;font-family:'Liberation Sans';transform:scaleX(1.0630);transform-origin:0 0;">23 Jul 08:30</div>
<div style="left:782px;top:598px;width:1px;height:5px;background:#fff"></div>
<div class="t" style="left:780.9px;top:603.0px;font-size:11.57px;color:#fff;font-weight:normal;font-family:'Liberation Sans';transform:scaleX(1.0630);transform-origin:0 0;">23 Jul 09:00</div>
<div style="left:878px;top:598px;width:1px;height:5px;background:#fff"></div>
<div class="t" style="left:876.9px;top:603.0px;font-size:11.57px;color:#fff;font-weight:normal;font-family:'Liberation Sans';transform:scaleX(1.0630);transform-origin:0 0;">23 Jul 09:30</div>
<div style="left:974px;top:598px;width:1px;height:5px;background:#fff"></div>
<div class="t" style="left:972.9px;top:603.0px;font-size:11.57px;color:#fff;font-weight:normal;font-family:'Liberation Sans';transform:scaleX(1.0630);transform-origin:0 0;">23 Jul 10:00</div>
<div style="left:1070px;top:598px;width:1px;height:5px;background:#fff"></div>
<div class="t" style="left:1068.9px;top:603.0px;font-size:11.57px;color:#fff;font-weight:normal;font-family:'Liberation Sans';transform:scaleX(1.0630);transform-origin:0 0;">23 Jul 10:30</div>
<div style="left:1166px;top:598px;width:1px;height:5px;background:#fff"></div>
<div class="t" style="left:1164.9px;top:603.0px;font-size:11.57px;color:#fff;font-weight:normal;font-family:'Liberation Sans';transform:scaleX(1.0779);transform-origin:0 0;">23 Jul 11:00</div>
<div style="left:1262px;top:598px;width:1px;height:5px;background:#fff"></div>
<div class="t" style="left:1260.9px;top:603.0px;font-size:11.57px;color:#fff;font-weight:normal;font-family:'Liberation Sans';transform:scaleX(1.0779);transform-origin:0 0;">23 Jul 11:30</div>
<div style="left:1358px;top:598px;width:1px;height:5px;background:#fff"></div>
<div class="t" style="left:1356.9px;top:603.0px;font-size:11.57px;color:#fff;font-weight:normal;font-family:'Liberation Sans';transform:scaleX(1.0630);transform-origin:0 0;">23 Jul 12:00</div>
<div style="left:1454px;top:598px;width:1px;height:5px;background:#fff"></div>
<div class="t" style="left:1452.9px;top:603.0px;font-size:11.57px;color:#fff;font-weight:normal;font-family:'Liberation Sans';transform:scaleX(1.0630);transform-origin:0 0;">23 Jul 12:30</div>
<div style="left:1550px;top:598px;width:1px;height:5px;background:#fff"></div>
<div class="t" style="left:1548.9px;top:603.0px;font-size:11.57px;color:#fff;font-weight:normal;font-family:'Liberation Sans';transform:scaleX(1.0630);transform-origin:0 0;">23 Jul 13:00</div>
<div style="left:1843px;top:136px;width:5px;height:1px;background:#fff"></div>
<div class="t" style="left:1849.8px;top:132.0px;font-size:11.86px;color:#fff;font-weight:normal;font-family:'Liberation Sans';transform:scaleX(1.0733);transform-origin:0 0;">199.050</div>
<div style="left:1843px;top:185px;width:5px;height:1px;background:#fff"></div>
<div class="t" style="left:1849.8px;top:181.0px;font-size:11.86px;color:#fff;font-weight:normal;font-family:'Liberation Sans';transform:scaleX(1.0733);transform-origin:0 0;">198.920</div>
<div style="left:1843px;top:234px;width:5px;height:1px;background:#fff"></div>
<div class="t" style="left:1849.8px;top:230.0px;font-size:11.86px;color:#fff;font-weight:normal;font-family:'Liberation Sans';transform:scaleX(1.0733);transform-origin:0 0;">198.790</div>
<div style="left:1843px;top:283px;width:5px;height:1px;background:#fff"></div>
<div class="t" style="left:1849.8px;top:279.0px;font-size:11.86px;color:#fff;font-weight:normal;font-family:'Liberation Sans';transform:scaleX(1.0733);transform-origin:0 0;">198.660</div>
<div style="left:1843px;top:332px;width:5px;height:1px;background:#fff"></div>
<div class="t" style="left:1849.8px;top:329.0px;font-size:11.86px;color:#fff;font-weight:normal;font-family:'Liberation Sans';transform:scaleX(1.0733);transform-origin:0 0;">198.530</div>
<div style="left:1843px;top:382px;width:5px;height:1px;background:#fff"></div>
<div class="t" style="left:1849.8px;top:378.0px;font-size:11.86px;color:#fff;font-weight:normal;font-family:'Liberation Sans';transform:scaleX(1.0733);transform-origin:0 0;">198.400</div>
<div style="left:1843px;top:431px;width:5px;height:1px;background:#fff"></div>
<div class="t" style="left:1849.8px;top:427.0px;font-size:11.86px;color:#fff;font-weight:normal;font-family:'Liberation Sans';transform:scaleX(1.0733);transform-origin:0 0;">198.270</div>
<div style="left:1843px;top:480px;width:5px;height:1px;background:#fff"></div>
<div class="t" style="left:1849.8px;top:476.0px;font-size:11.86px;color:#fff;font-weight:normal;font-family:'Liberation Sans';transform:scaleX(1.0733);transform-origin:0 0;">198.140</div>
<div style="left:1843px;top:529px;width:5px;height:1px;background:#fff"></div>
<div class="t" style="left:1849.8px;top:525.0px;font-size:11.86px;color:#fff;font-weight:normal;font-family:'Liberation Sans';transform:scaleX(1.0733);transform-origin:0 0;">198.010</div>
<div style="left:1843px;top:578px;width:5px;height:1px;background:#fff"></div>
<div class="t" style="left:1849.8px;top:575.0px;font-size:11.86px;color:#fff;font-weight:normal;font-family:'Liberation Sans';transform:scaleX(1.0733);transform-origin:0 0;">197.880</div>
<div style="left:1848px;top:383px;width:58px;height:9px;background:#000"></div>
<div style="left:14px;top:399px;width:1829px;height:1px;background:#9a9a9a"></div>
<div style="left:1845px;top:392px;width:56px;height:14px;background:#fff"></div>
<div class="t" style="left:1849.8px;top:395.0px;font-size:11.86px;color:#000;font-weight:normal;font-family:'Liberation Sans';transform:scaleX(1.0733);transform-origin:0 0;">198.355</div>
<div class="t" style="left:1449.7px;top:107.0px;font-size:12.86px;color:#fff;font-weight:normal;font-family:'Liberation Sans';transform:scaleX(0.9583);transform-origin:0 0;">MT4talk © Forex AI Signal - Trade Executor - STANDARD - V10.5.1</div>
<svg style="left:1824px;top:104px" width="16" height="16"><circle cx="7.5" cy="7.5" r="6.3" fill="none" stroke="#fff" stroke-width="1.3"/><circle cx="5.3" cy="5.8" r="0.9" fill="#fff"/><circle cx="9.7" cy="5.8" r="0.9" fill="#fff"/><path d="M4.5 11 Q7.5 8.3 10.5 11" fill="none" stroke="#fff" stroke-width="1.1"/></svg>
<svg style="left:1651px;top:101px" width="14" height="8"><path d="M0 0 L12 0 L6 6 Z" fill="#8a9aaa"/></svg>
<div style="left:700px;top:110px;width:480px;height:21.5px;overflow:hidden">
<div class="t" style="left:40.8px;top:8.0px;font-size:19.29px;color:#fff;font-weight:normal;font-family:'Liberation Sans';transform:scaleX(1.0527);transform-origin:0 0;">MT4talk © Forex AI Signal - Trade Executor</div>
</div>
<div class="t" style="left:859.4px;top:138.0px;font-size:19.29px;color:#fff;font-weight:normal;font-family:'Liberation Sans';transform:scaleX(1.0104);transform-origin:0 0;">Standard V10.5.1</div>
<div style="left:1705px;top:123px;width:129px;height:48px;background:#ff0000;border:1px solid #ff6060"></div>
<div class="t" style="left:1705.1px;top:140.0px;font-size:15.71px;color:#fff;font-weight:normal;font-family:'Liberation Sans';transform:scaleX(1.0874);transform-origin:0 0;">Close All Orders</div>
<div style="left:1664px;top:172px;width:170px;height:90px;background:#d3d3d3"></div>
<div style="left:1664px;top:201px;width:170px;height:1px;background:#c4c4c4"></div>
<div style="left:1664px;top:231px;width:170px;height:1px;background:#c4c4c4"></div>
<div class="t" style="left:1686.3px;top:180.0px;font-size:15.71px;color:#303030;font-weight:normal;font-family:'Liberation Sans';transform:scaleX(1.1558);transform-origin:0 0;-webkit-text-stroke:0.3px #303030">Real-time profit</div>
<div class="t" style="left:1688.1px;top:210.0px;font-size:15.71px;color:#303030;font-weight:normal;font-family:'Liberation Sans';transform:scaleX(1.1209);transform-origin:0 0;-webkit-text-stroke:0.3px #303030">since all trades</div>
<div class="t" style="left:1686.1px;top:239.0px;font-size:15.71px;color:#303030;font-weight:normal;font-family:'Liberation Sans';transform:scaleX(1.1404);transform-origin:0 0;-webkit-text-stroke:0.3px #303030">closed last time</div>
<div style="left:1664px;top:262px;width:170px;height:29px;background:#dc143c;border:1px solid #f07090"></div>
<div class="t" style="left:1688.2px;top:269.0px;font-size:15.71px;color:#fff;font-weight:normal;font-family:'Liberation Sans';transform:scaleX(1.0425);transform-origin:0 0;">-1559.60 (-40%)</div>
<div style="left:1664px;top:292px;width:170px;height:30px;background:#dc143c;border:1px solid #f07090"></div>
<div class="t" style="left:1667.1px;top:299.0px;font-size:15.71px;color:#fff;font-weight:normal;font-family:'Liberation Sans';transform:scaleX(1.0961);transform-origin:0 0;">Not Safe To Close All</div>
<svg style="left:17px;top:109px" width="10" height="5"><path d="M0 0 L9 0 L4.5 4.5 Z" fill="#fff"/></svg>
<div class="t" style="left:32.2px;top:107.0px;font-size:12.14px;color:#fff;font-weight:normal;font-family:'Liberation Sans';transform:scaleX(0.9104);transform-origin:0 0;">GBPJPYc,M5</div>
<div style="left:14px;top:122px;width:199px;height:20px;background:#dc143c"></div>
<div class="t" style="left:17.7px;top:123.0px;font-size:16.43px;color:#7a1020;font-weight:normal;font-family:'Liberation Sans';transform:scaleX(1.2686);transform-origin:0 0;">Equity: 3.8%</div>
<div style="left:14px;top:142px;width:199px;height:20px;background:#fff;border-bottom:1px solid #b8c0c8"></div>
<div class="t" style="left:17.8px;top:143.0px;font-size:16.43px;color:#302828;font-weight:normal;font-family:'Liberation Sans';transform:scaleX(1.0575);transform-origin:0 0;-webkit-text-stroke:0.35px #302828">Next Equity Target: 4023.</div>
<div style="left:14px;top:162px;width:199px;height:20px;background:#fff;border-bottom:1px solid #b8c0c8"></div>
<div class="t" style="left:18.0px;top:166.0px;font-size:13.14px;color:#302828;font-weight:normal;font-family:'Liberation Sans';-webkit-text-stroke:0.35px #302828">Current Matched Threshold: 58.9</div>
<div style="left:14px;top:182px;width:100px;height:19px;background:#d6dae4"></div>
<div class="t" style="left:28.7px;top:182.0px;font-size:16.43px;color:#302828;font-weight:normal;font-family:'Liberation Sans';transform:scaleX(1.0385);transform-origin:0 0;-webkit-text-stroke:0.35px #302828">Hide Info</div>
<div style="left:14px;top:202px;width:200px;height:20px;background:#fff"></div>
<div class="t" style="left:17.9px;top:204.0px;font-size:15.71px;color:#302828;font-weight:normal;font-family:'Liberation Sans';transform:scaleX(1.0499);transform-origin:0 0;-webkit-text-stroke:0.35px #302828">Scheduled Orders: 0</div>
<div style="left:14px;top:242px;width:200px;height:20px;background:#fff"></div>
<div class="t" style="left:17.9px;top:243.0px;font-size:15.71px;color:#302828;font-weight:normal;font-family:'Liberation Sans';transform:scaleX(1.0483);transform-origin:0 0;-webkit-text-stroke:0.35px #302828">Open Orders: 20</div>
<div style="left:214px;top:122px;width:200px;height:20px;background:#b0c4de"></div>
<div style="left:214px;top:142px;width:200px;height:20px;background:#b0c4de;border-top:1px solid #a0b0c8"></div>
<div style="left:414px;top:122px;width:200px;height:20px;background:#add8e6"></div>
<div style="left:414px;top:142px;width:200px;height:20px;background:#add8e6;border-top:1px solid #98c0d0"></div>
<div style="left:214px;top:162px;width:200px;height:20px;background:#d3d3d8"></div>
<div class="t" style="left:218.3px;top:126.0px;font-size:13.14px;color:#303040;font-weight:normal;font-family:'Liberation Sans';-webkit-text-stroke:0.3px #303040">Current Time GMT +2:</div>
<div class="t" style="left:217.8px;top:145.0px;font-size:13.14px;color:#303040;font-weight:normal;font-family:'Liberation Sans';transform:scaleX(1.0058);transform-origin:0 0;-webkit-text-stroke:0.3px #303040">Last Server Communication:</div>
<div class="t" style="left:417.8px;top:126.0px;font-size:13.14px;color:#303040;font-weight:normal;font-family:'Liberation Sans';transform:scaleX(1.0177);transform-origin:0 0;-webkit-text-stroke:0.3px #303040">2025.07.23 15:25:50</div>
<div class="t" style="left:417.8px;top:145.0px;font-size:13.14px;color:#303040;font-weight:normal;font-family:'Liberation Sans';transform:scaleX(1.0093);transform-origin:0 0;-webkit-text-stroke:0.3px #303040">2025.07.23 15:21:31</div>
<div class="t" style="left:265.9px;top:165.0px;font-size:13.14px;color:#303040;font-weight:normal;font-family:'Liberation Sans';transform:scaleX(0.9736);transform-origin:0 0;-webkit-text-stroke:0.3px #303040">Reset Threshold</div>
<div style="left:14px;top:261px;width:750px;height:337px;overflow:hidden">
<div style="left:0px;top:0px;width:750px;height:20px;background:#fff;border-top:2px solid #c4ccd4"></div>
<div style="left:49px;top:0px;width:2px;height:20px;background:#c4ccd6"></div>
<div style="left:449px;top:0px;width:1px;height:20px;background:#b8c8dc"></div>
<div class="t" style="left:3.9px;top:3.0px;font-size:14.29px;color:#302828;font-weight:normal;font-family:'Liberation Sans';transform:scaleX(1.1354);transform-origin:0 0;-webkit-text-stroke:0.35px #302828">#4074</div>
<div style="left:51px;top:0px;width:398px;height:20px;overflow:hidden">
<div class="t" style="left:2.2px;top:3.0px;font-size:14.29px;color:#302828;font-weight:normal;font-family:'Liberation Sans';transform:scaleX(1.1482);transform-origin:0 0;-webkit-text-stroke:0.35px #302828">EURAUDc, Buy, on 2025.07.22 17:21:12 +2.0GMT</div>
<div class="t" style="left:382.3px;top:3.0px;font-size:14.29px;color:#302828;font-weight:normal;font-family:'Liberation Sans';transform:scaleX(0.9503);transform-origin:0 0;-webkit-text-stroke:0.35px #302828">(O</div>
</div>
<div class="t" style="left:452.6px;top:3.0px;font-size:14.29px;color:#302828;font-weight:normal;font-family:'Liberation Sans';transform:scaleX(1.2201);transform-origin:0 0;-webkit-text-stroke:0.35px #302828">- No. Positive Martingales: 0</div>
<div style="left:0px;top:20px;width:750px;height:20px;background:#fff;border-top:2px solid #c4ccd4"></div>
<div style="left:49px;top:20px;width:2px;height:20px;background:#c4ccd6"></div>
<div style="left:449px;top:20px;width:1px;height:20px;background:#b8c8dc"></div>
<div class="t" style="left:3.9px;top:23.0px;font-size:14.29px;color:#302828;font-weight:normal;font-family:'Liberation Sans';transform:scaleX(1.1354);transform-origin:0 0;-webkit-text-stroke:0.35px #302828">#4156</div>
<div style="left:51px;top:20px;width:398px;height:20px;overflow:hidden">
<div class="t" style="left:2.2px;top:3.0px;font-size:14.29px;color:#302828;font-weight:normal;font-family:'Liberation Sans';transform:scaleX(1.1482);transform-origin:0 0;-webkit-text-stroke:0.35px #302828">EURAUDc, Buy, on 2025.07.22 17:36:12 +2.0GMT</div>
<div class="t" style="left:382.3px;top:3.0px;font-size:14.29px;color:#302828;font-weight:normal;font-family:'Liberation Sans';transform:scaleX(0.9503);transform-origin:0 0;-webkit-text-stroke:0.35px #302828">(O</div>
</div>
<div class="t" style="left:452.6px;top:23.0px;font-size:14.29px;color:#302828;font-weight:normal;font-family:'Liberation Sans';transform:scaleX(1.2201);transform-origin:0 0;-webkit-text-stroke:0.35px #302828">- No. Positive Martingales: 0</div>
<div style="left:0px;top:40px;width:750px;height:20px;background:#fff;border-top:2px solid #c4ccd4"></div>
<div style="left:49px;top:40px;width:2px;height:20px;background:#c4ccd6"></div>
<div style="left:449px;top:40px;width:1px;height:20px;background:#b8c8dc"></div>
<div class="t" style="left:3.9px;top:43.0px;font-size:14.29px;color:#302828;font-weight:normal;font-family:'Liberation Sans';transform:scaleX(1.1354);transform-origin:0 0;-webkit-text-stroke:0.35px #302828">#4184</div>
<div style="left:51px;top:40px;width:398px;height:20px;overflow:hidden">
<div class="t" style="left:2.2px;top:3.0px;font-size:14.29px;color:#302828;font-weight:normal;font-family:'Liberation Sans';transform:scaleX(1.1482);transform-origin:0 0;-webkit-text-stroke:0.35px #302828">EURAUDc, Buy, on 2025.07.22 17:41:12 +2.0GMT</div>
<div class="t" style="left:382.3px;top:3.0px;font-size:14.29px;color:#302828;font-weight:normal;font-family:'Liberation Sans';transform:scaleX(0.9503);transform-origin:0 0;-webkit-text-stroke:0.35px #302828">(O</div>
</div>
<div class="t" style="left:452.6px;top:43.0px;font-size:14.29px;color:#302828;font-weight:normal;font-family:'Liberation Sans';transform:scaleX(1.2201);transform-origin:0 0;-webkit-text-stroke:0.35px #302828">- No. Positive Martingales: 0</div>
<div style="left:0px;top:60px;width:750px;height:20px;background:#fff;border-top:2px solid #c4ccd4"></div>
<div style="left:49px;top:60px;width:2px;height:20px;background:#c4ccd6"></div>
<div style="left:449px;top:60px;width:1px;height:20px;background:#b8c8dc"></div>
<div class="t" style="left:3.9px;top:63.0px;font-size:14.29px;color:#302828;font-weight:normal;font-family:'Liberation Sans';transform:scaleX(1.1354);transform-origin:0 0;-webkit-text-stroke:0.35px #302828">#4239</div>
<div style="left:51px;top:60px;width:398px;height:20px;overflow:hidden">
<div class="t" style="left:2.2px;top:3.0px;font-size:14.29px;color:#302828;font-weight:normal;font-family:'Liberation Sans';transform:scaleX(1.1482);transform-origin:0 0;-webkit-text-stroke:0.35px #302828">EURAUDc, Buy, on 2025.07.22 17:51:12 +2.0GMT</div>
<div class="t" style="left:382.3px;top:3.0px;font-size:14.29px;color:#302828;font-weight:normal;font-family:'Liberation Sans';transform:scaleX(0.9503);transform-origin:0 0;-webkit-text-stroke:0.35px #302828">(O</div>
</div>
<div class="t" style="left:452.6px;top:63.0px;font-size:14.29px;color:#302828;font-weight:normal;font-family:'Liberation Sans';transform:scaleX(1.2201);transform-origin:0 0;-webkit-text-stroke:0.35px #302828">- No. Positive Martingales: 0</div>
<div style="left:0px;top:80px;width:750px;height:20px;background:#fff;border-top:2px solid #c4ccd4"></div>
<div style="left:49px;top:80px;width:2px;height:20px;background:#c4ccd6"></div>
<div style="left:449px;top:80px;width:1px;height:20px;background:#b8c8dc"></div>
<div class="t" style="left:3.9px;top:83.0px;font-size:14.29px;color:#302828;font-weight:normal;font-family:'Liberation Sans';transform:scaleX(1.1354);transform-origin:0 0;-webkit-text-stroke:0.35px #302828">#4376</div>
<div style="left:51px;top:80px;width:398px;height:20px;overflow:hidden">
<div class="t" style="left:2.2px;top:3.0px;font-size:14.29px;color:#302828;font-weight:normal;font-family:'Liberation Sans';transform:scaleX(1.1482);transform-origin:0 0;-webkit-text-stroke:0.35px #302828">EURAUDc, Buy, on 2025.07.22 18:16:12 +2.0GMT</div>
<div class="t" style="left:382.3px;top:3.0px;font-size:14.29px;color:#302828;font-weight:normal;font-family:'Liberation Sans';transform:scaleX(0.9503);transform-origin:0 0;-webkit-text-stroke:0.35px #302828">(O</div>
</div>
<div class="t" style="left:452.6px;top:83.0px;font-size:14.29px;color:#302828;font-weight:normal;font-family:'Liberation Sans';transform:scaleX(1.2031);transform-origin:0 0;-webkit-text-stroke:0.35px #302828">- No. Positive Martingales: 1</div>
<div style="left:0px;top:100px;width:750px;height:20px;background:#fff;border-top:2px solid #c4ccd4"></div>
<div style="left:49px;top:100px;width:2px;height:20px;background:#c4ccd6"></div>
<div style="left:449px;top:100px;width:1px;height:20px;background:#b8c8dc"></div>
<div class="t" style="left:3.9px;top:103.0px;font-size:14.29px;color:#302828;font-weight:normal;font-family:'Liberation Sans';transform:scaleX(1.1354);transform-origin:0 0;-webkit-text-stroke:0.35px #302828">#4430</div>
<div style="left:51px;top:100px;width:398px;height:20px;overflow:hidden">
<div class="t" style="left:2.2px;top:3.0px;font-size:14.29px;color:#302828;font-weight:normal;font-family:'Liberation Sans';transform:scaleX(1.1482);transform-origin:0 0;-webkit-text-stroke:0.35px #302828">EURAUDc, Buy, on 2025.07.22 18:26:12 +2.0GMT</div>
<div class="t" style="left:382.3px;top:3.0px;font-size:14.29px;color:#302828;font-weight:normal;font-family:'Liberation Sans';transform:scaleX(0.9503);transform-origin:0 0;-webkit-text-stroke:0.35px #302828">(O</div>
</div>
<div class="t" style="left:452.6px;top:103.0px;font-size:14.29px;color:#302828;font-weight:normal;font-family:'Liberation Sans';transform:scaleX(1.2201);transform-origin:0 0;-webkit-text-stroke:0.35px #302828">- No. Positive Martingales: 0</div>
<div style="left:0px;top:120px;width:750px;height:20px;background:#fff;border-top:2px solid #c4ccd4"></div>
<div style="left:49px;top:120px;width:2px;height:20px;background:#c4ccd6"></div>
<div style="left:449px;top:120px;width:1px;height:20px;background:#b8c8dc"></div>
<div class="t" style="left:3.9px;top:123.0px;font-size:14.29px;color:#302828;font-weight:normal;font-family:'Liberation Sans';transform:scaleX(1.1354);transform-origin:0 0;-webkit-text-stroke:0.35px #302828">#4457</div>
<div style="left:51px;top:120px;width:398px;height:20px;overflow:hidden">
<div class="t" style="left:2.2px;top:3.0px;font-size:14.29px;color:#302828;font-weight:normal;font-family:'Liberation Sans';transform:scaleX(1.1482);transform-origin:0 0;-webkit-text-stroke:0.35px #302828">EURAUDc, Buy, on 2025.07.22 18:31:12 +2.0GMT</div>
<div class="t" style="left:382.3px;top:3.0px;font-size:14.29px;color:#302828;font-weight:normal;font-family:'Liberation Sans';transform:scaleX(0.9503);transform-origin:0 0;-webkit-text-stroke:0.35px #302828">(O</div>
</div>
<div class="t" style="left:452.6px;top:123.0px;font-size:14.29px;color:#302828;font-weight:normal;font-family:'Liberation Sans';transform:scaleX(1.2031);transform-origin:0 0;-webkit-text-stroke:0.35px #302828">- No. Positive Martingales: 1</div>
<div style="left:0px;top:140px;width:750px;height:20px;background:#fff;border-top:2px solid #c4ccd4"></div>
<div style="left:49px;top:140px;width:2px;height:20px;background:#c4ccd6"></div>
<div style="left:449px;top:140px;width:1px;height:20px;background:#b8c8dc"></div>
<div class="t" style="left:3.9px;top:143.0px;font-size:14.29px;color:#302828;font-weight:normal;font-family:'Liberation Sans';transform:scaleX(1.1354);transform-origin:0 0;-webkit-text-stroke:0.35px #302828">#4484</div>
<div style="left:51px;top:140px;width:398px;height:20px;overflow:hidden">
<div class="t" style="left:2.2px;top:3.0px;font-size:14.29px;color:#302828;font-weight:normal;font-family:'Liberation Sans';transform:scaleX(1.1482);transform-origin:0 0;-webkit-text-stroke:0.35px #302828">EURAUDc, Buy, on 2025.07.22 18:36:12 +2.0GMT</div>
<div class="t" style="left:382.3px;top:3.0px;font-size:14.29px;color:#302828;font-weight:normal;font-family:'Liberation Sans';transform:scaleX(0.9503);transform-origin:0 0;-webkit-text-stroke:0.35px #302828">(O</div>
</div>
<div class="t" style="left:452.6px;top:143.0px;font-size:14.29px;color:#302828;font-weight:normal;font-family:'Liberation Sans';transform:scaleX(1.2031);transform-origin:0 0;-webkit-text-stroke:0.35px #302828">- No. Positive Martingales: 1</div>
<div style="left:0px;top:160px;width:750px;height:20px;background:#fff;border-top:2px solid #c4ccd4"></div>
<div style="left:49px;top:160px;width:2px;height:20px;background:#c4ccd6"></div>
<div style="left:449px;top:160px;width:1px;height:20px;background:#b8c8dc"></div>
<div class="t" style="left:3.9px;top:163.0px;font-size:14.29px;color:#302828;font-weight:normal;font-family:'Liberation Sans';transform:scaleX(1.1354);transform-origin:0 0;-webkit-text-stroke:0.35px #302828">#4491</div>
<div style="left:51px;top:160px;width:398px;height:20px;overflow:hidden">
<div class="t" style="left:2.2px;top:3.0px;font-size:14.29px;color:#302828;font-weight:normal;font-family:'Liberation Sans';transform:scaleX(1.1490);transform-origin:0 0;-webkit-text-stroke:0.35px #302828">GBPJPYc, Sell, on 2025.07.22 18:36:12 +2.0GMT</div>
<div class="t" style="left:378.0px;top:3.0px;font-size:14.29px;color:#302828;font-weight:normal;font-family:'Liberation Sans';transform:scaleX(1.3346);transform-origin:0 0;-webkit-text-stroke:0.35px #302828">(Or</div>
</div>
<div class="t" style="left:452.6px;top:163.0px;font-size:14.29px;color:#302828;font-weight:normal;font-family:'Liberation Sans';transform:scaleX(1.2201);transform-origin:0 0;-webkit-text-stroke:0.35px #302828">- No. Positive Martingales: 0</div>
<div style="left:0px;top:180px;width:750px;height:20px;background:#fff;border-top:2px solid #c4ccd4"></div>
<div style="left:49px;top:180px;width:2px;height:20px;background:#c4ccd6"></div>
<div style="left:449px;top:180px;width:1px;height:20px;background:#b8c8dc"></div>
<div class="t" style="left:3.9px;top:183.0px;font-size:14.29px;color:#302828;font-weight:normal;font-family:'Liberation Sans';transform:scaleX(1.1354);transform-origin:0 0;-webkit-text-stroke:0.35px #302828">#4512</div>
<div style="left:51px;top:180px;width:398px;height:20px;overflow:hidden">
<div class="t" style="left:2.2px;top:3.0px;font-size:14.29px;color:#302828;font-weight:normal;font-family:'Liberation Sans';transform:scaleX(1.1482);transform-origin:0 0;-webkit-text-stroke:0.35px #302828">EURAUDc, Buy, on 2025.07.22 18:41:12 +2.0GMT</div>
<div class="t" style="left:382.3px;top:3.0px;font-size:14.29px;color:#302828;font-weight:normal;font-family:'Liberation Sans';transform:scaleX(0.9503);transform-origin:0 0;-webkit-text-stroke:0.35px #302828">(O</div>
</div>
<div class="t" style="left:452.6px;top:183.0px;font-size:14.29px;color:#302828;font-weight:normal;font-family:'Liberation Sans';transform:scaleX(1.2201);transform-origin:0 0;-webkit-text-stroke:0.35px #302828">- No. Positive Martingales: 0</div>
<div style="left:0px;top:200px;width:750px;height:20px;background:#fff;border-top:2px solid #c4ccd4"></div>
<div style="left:49px;top:200px;width:2px;height:20px;background:#c4ccd6"></div>
<div style="left:449px;top:200px;width:1px;height:20px;background:#b8c8dc"></div>
<div class="t" style="left:3.9px;top:203.0px;font-size:14.29px;color:#302828;font-weight:normal;font-family:'Liberation Sans';transform:scaleX(1.1354);transform-origin:0 0;-webkit-text-stroke:0.35px #302828">#4519</div>
<div style="left:51px;top:200px;width:398px;height:20px;overflow:hidden">
<div class="t" style="left:2.2px;top:3.0px;font-size:14.29px;color:#302828;font-weight:normal;font-family:'Liberation Sans';transform:scaleX(1.1490);transform-origin:0 0;-webkit-text-stroke:0.35px #302828">GBPJPYc, Sell, on 2025.07.22 18:41:12 +2.0GMT</div>
<div class="t" style="left:378.0px;top:3.0px;font-size:14.29px;color:#302828;font-weight:normal;font-family:'Liberation Sans';transform:scaleX(1.3346);transform-origin:0 0;-webkit-text-stroke:0.35px #302828">(Or</div>
</div>
<div class="t" style="left:452.6px;top:203.0px;font-size:14.29px;color:#302828;font-weight:normal;font-family:'Liberation Sans';transform:scaleX(1.2201);transform-origin:0 0;-webkit-text-stroke:0.35px #302828">- No. Positive Martingales: 0</div>
<div style="left:0px;top:220px;width:750px;height:20px;background:#fff;border-top:2px solid #c4ccd4"></div>
<div style="left:49px;top:220px;width:2px;height:20px;background:#c4ccd6"></div>
<div style="left:449px;top:220px;width:1px;height:20px;background:#b8c8dc"></div>
<div class="t" style="left:3.9px;top:223.0px;font-size:14.29px;color:#302828;font-weight:normal;font-family:'Liberation Sans';transform:scaleX(1.1354);transform-origin:0 0;-webkit-text-stroke:0.35px #302828">#4547</div>
<div style="left:51px;top:220px;width:398px;height:20px;overflow:hidden">
<div class="t" style="left:2.2px;top:3.0px;font-size:14.29px;color:#302828;font-weight:normal;font-family:'Liberation Sans';transform:scaleX(1.1490);transform-origin:0 0;-webkit-text-stroke:0.35px #302828">GBPJPYc, Sell, on 2025.07.22 18:46:12 +2.0GMT</div>
<div class="t" style="left:378.0px;top:3.0px;font-size:14.29px;color:#302828;font-weight:normal;font-family:'Liberation Sans';transform:scaleX(1.3346);transform-origin:0 0;-webkit-text-stroke:0.35px #302828">(Or</div>
</div>
<div class="t" style="left:452.6px;top:223.0px;font-size:14.29px;color:#302828;font-weight:normal;font-family:'Liberation Sans';transform:scaleX(1.2201);transform-origin:0 0;-webkit-text-stroke:0.35px #302828">- No. Positive Martingales: 0</div>
<div style="left:0px;top:240px;width:750px;height:20px;background:#fff;border-top:2px solid #c4ccd4"></div>
<div style="left:49px;top:240px;width:2px;height:20px;background:#c4ccd6"></div>
<div style="left:449px;top:240px;width:1px;height:20px;background:#b8c8dc"></div>
<div class="t" style="left:3.9px;top:243.0px;font-size:14.29px;color:#302828;font-weight:normal;font-family:'Liberation Sans';transform:scaleX(1.1354);transform-origin:0 0;-webkit-text-stroke:0.35px #302828">#4622</div>
<div style="left:51px;top:240px;width:398px;height:20px;overflow:hidden">
<div class="t" style="left:2.2px;top:3.0px;font-size:14.29px;color:#302828;font-weight:normal;font-family:'Liberation Sans';transform:scaleX(1.1482);transform-origin:0 0;-webkit-text-stroke:0.35px #302828">EURAUDc, Buy, on 2025.07.22 19:01:12 +2.0GMT</div>
<div class="t" style="left:382.3px;top:3.0px;font-size:14.29px;color:#302828;font-weight:normal;font-family:'Liberation Sans';transform:scaleX(0.9503);transform-origin:0 0;-webkit-text-stroke:0.35px #302828">(O</div>
</div>
<div class="t" style="left:452.6px;top:243.0px;font-size:14.29px;color:#302828;font-weight:normal;font-family:'Liberation Sans';transform:scaleX(1.2201);transform-origin:0 0;-webkit-text-stroke:0.35px #302828">- No. Positive Martingales: 0</div>
<div style="left:0px;top:260px;width:750px;height:20px;background:#fff;border-top:2px solid #c4ccd4"></div>
<div style="left:49px;top:260px;width:2px;height:20px;background:#c4ccd6"></div>
<div style="left:449px;top:260px;width:1px;height:20px;background:#b8c8dc"></div>
<div class="t" style="left:3.9px;top:263.0px;font-size:14.29px;color:#302828;font-weight:normal;font-family:'Liberation Sans';transform:scaleX(1.1354);transform-origin:0 0;-webkit-text-stroke:0.35px #302828">#4649</div>
<div style="left:51px;top:260px;width:398px;height:20px;overflow:hidden">
<div class="t" style="left:2.2px;top:3.0px;font-size:14.29px;color:#302828;font-weight:normal;font-family:'Liberation Sans';transform:scaleX(1.1482);transform-origin:0 0;-webkit-text-stroke:0.35px #302828">EURAUDc, Buy, on 2025.07.22 19:06:12 +2.0GMT</div>
<div class="t" style="left:382.3px;top:3.0px;font-size:14.29px;color:#302828;font-weight:normal;font-family:'Liberation Sans';transform:scaleX(0.9503);transform-origin:0 0;-webkit-text-stroke:0.35px #302828">(O</div>
</div>
<div class="t" style="left:452.6px;top:263.0px;font-size:14.29px;color:#302828;font-weight:normal;font-family:'Liberation Sans';transform:scaleX(1.2201);transform-origin:0 0;-webkit-text-stroke:0.35px #302828">- No. Positive Martingales: 0</div>
<div style="left:0px;top:280px;width:750px;height:20px;background:#fff;border-top:2px solid #c4ccd4"></div>
<div style="left:49px;top:280px;width:2px;height:20px;background:#c4ccd6"></div>
<div style="left:449px;top:280px;width:1px;height:20px;background:#b8c8dc"></div>
<div class="t" style="left:3.9px;top:283.0px;font-size:14.29px;color:#302828;font-weight:normal;font-family:'Liberation Sans';transform:scaleX(1.1354);transform-origin:0 0;-webkit-text-stroke:0.35px #302828">#4676</div>
<div style="left:51px;top:280px;width:398px;height:20px;overflow:hidden">
<div class="t" style="left:2.2px;top:3.0px;font-size:14.29px;color:#302828;font-weight:normal;font-family:'Liberation Sans';transform:scaleX(1.1520);transform-origin:0 0;-webkit-text-stroke:0.35px #302828">EURAUDc, Buy, on 2025.07.22 19:11:12 +2.0GMT</div>
<div class="t" style="left:382.3px;top:3.0px;font-size:14.29px;color:#302828;font-weight:normal;font-family:'Liberation Sans';transform:scaleX(0.9503);transform-origin:0 0;-webkit-text-stroke:0.35px #302828">(O</div>
</div>
<div class="t" style="left:452.6px;top:283.0px;font-size:14.29px;color:#302828;font-weight:normal;font-family:'Liberation Sans';transform:scaleX(1.2201);transform-origin:0 0;-webkit-text-stroke:0.35px #302828">- No. Positive Martingales: 0</div>
<div style="left:0px;top:300px;width:750px;height:20px;background:#fff;border-top:2px solid #c4ccd4"></div>
<div style="left:49px;top:300px;width:2px;height:20px;background:#c4ccd6"></div>
<div style="left:449px;top:300px;width:1px;height:20px;background:#b8c8dc"></div>
<div class="t" style="left:3.9px;top:303.0px;font-size:14.29px;color:#302828;font-weight:normal;font-family:'Liberation Sans';transform:scaleX(1.1354);transform-origin:0 0;-webkit-text-stroke:0.35px #302828">#4703</div>
<div style="left:51px;top:300px;width:398px;height:20px;overflow:hidden">
<div class="t" style="left:2.2px;top:3.0px;font-size:14.29px;color:#302828;font-weight:normal;font-family:'Liberation Sans';transform:scaleX(1.1482);transform-origin:0 0;-webkit-text-stroke:0.35px #302828">EURAUDc, Buy, on 2025.07.22 19:16:12 +2.0GMT</div>
<div class="t" style="left:382.3px;top:3.0px;font-size:14.29px;color:#302828;font-weight:normal;font-family:'Liberation Sans';transform:scaleX(0.9503);transform-origin:0 0;-webkit-text-stroke:0.35px #302828">(O</div>
</div>
<div class="t" style="left:452.6px;top:303.0px;font-size:14.29px;color:#302828;font-weight:normal;font-family:'Liberation Sans';transform:scaleX(1.2201);transform-origin:0 0;-webkit-text-stroke:0.35px #302828">- No. Positive Martingales: 0</div>
<div style="left:0px;top:320px;width:750px;height:20px;background:#fff;border-top:2px solid #c4ccd4"></div>
<div style="left:49px;top:320px;width:2px;height:20px;background:#c4ccd6"></div>
<div style="left:449px;top:320px;width:1px;height:20px;background:#b8c8dc"></div>
<div class="t" style="left:3.9px;top:323.0px;font-size:14.29px;color:#302828;font-weight:normal;font-family:'Liberation Sans';transform:scaleX(1.1354);transform-origin:0 0;-webkit-text-stroke:0.35px #302828">#4730</div>
<div style="left:51px;top:320px;width:398px;height:20px;overflow:hidden">
<div class="t" style="left:2.2px;top:3.0px;font-size:14.29px;color:#302828;font-weight:normal;font-family:'Liberation Sans';transform:scaleX(1.1482);transform-origin:0 0;-webkit-text-stroke:0.35px #302828">EURAUDc, Buy, on 2025.07.22 19:21:12 +2.0GMT</div>
<div class="t" style="left:382.3px;top:3.0px;font-size:14.29px;color:#302828;font-weight:normal;font-family:'Liberation Sans';transform:scaleX(0.9503);transform-origin:0 0;-webkit-text-stroke:0.35px #302828">(O</div>
</div>
<div class="t" style="left:452.6px;top:323.0px;font-size:14.29px;color:#302828;font-weight:normal;font-family:'Liberation Sans';transform:scaleX(1.2201);transform-origin:0 0;-webkit-text-stroke:0.35px #302828">- No. Positive Martingales: 0</div>
<div style="left:0px;top:0px;width:1px;height:337px;background:#c8d0d8"></div>
</div>
<div style="left:24px;top:112px;width:100px;height:26px;background:#fff"></div>
<div style="left:26px;top:113px;width:97px;height:22px;background:#c8c8f0"></div>
<div style="left:27px;top:114px;width:95px;height:20px;background:#1c1c8e"></div>
<div style="left:83px;top:114px;width:1px;height:20px;background:#c8c8e8"></div>
<div class="t" style="left:29.8px;top:115.0px;font-size:16.29px;color:#fff;font-weight:normal;font-family:'Liberation Sans';transform:scaleX(0.9624);transform-origin:0 0;">WARNI</div>
<div style="left:87px;top:127px;width:10px;height:2px;background:#b0b0d8"></div>
<svg style="left:105px;top:119px" width="12" height="12"><path d="M2.5 2.5 L9.5 9.5 M9.5 2.5 L2.5 9.5" stroke="#c0c0e8" stroke-width="1.7"/></svg>
<div style="left:28px;top:134px;width:94px;height:3px;background:#c0c0c0"></div>
<div style="left:9px;top:623px;width:1900px;height:378px;background:#fff"></div>
<div style="left:9px;top:1001px;width:1900px;height:1px;background:#a0a0a0"></div>
<div style="left:9px;top:1002px;width:1900px;height:29px;background:#fff"></div>
<svg style="left:15px;top:630px" width="9" height="9"><path d="M0.5 0.5 L8 8 M8 0.5 L0.5 8" stroke="#000" stroke-width="1.3"/></svg>
<div class="t" style="left:13.8px;top:994.5px;font-size:14.3px;color:#202020;transform:rotate(-90deg) scaleX(0.95);transform-origin:0 0">Terminal</div>
<div style="left:29px;top:628px;width:1px;height:367px;background:#a8a8a8"></div>
<div style="left:30px;top:627px;width:1852px;height:27px;background:#fff;border-top:2px solid #000;border-bottom:2px solid #000"></div>
<div style="left:30px;top:627px;width:2px;height:27px;background:#000"></div>
<div style="left:165px;top:627px;width:2px;height:27px;background:#000"></div>
<div style="left:396px;top:627px;width:2px;height:27px;background:#000"></div>
<div style="left:500px;top:627px;width:2px;height:27px;background:#000"></div>
<div style="left:585px;top:627px;width:2px;height:27px;background:#000"></div>
<div style="left:690px;top:627px;width:2px;height:27px;background:#000"></div>
<div style="left:795px;top:627px;width:2px;height:27px;background:#000"></div>
<div style="left:900px;top:627px;width:2px;height:27px;background:#000"></div>
<div style="left:1005px;top:627px;width:2px;height:27px;background:#000"></div>
<div style="left:1236px;top:627px;width:2px;height:27px;background:#000"></div>
<div style="left:1341px;top:627px;width:2px;height:27px;background:#000"></div>
<div style="left:1447px;top:627px;width:2px;height:27px;background:#000"></div>
<div style="left:1562px;top:627px;width:2px;height:27px;background:#000"></div>
<div style="left:1881px;top:627px;width:2px;height:27px;background:#000"></div>
<div class="t" style="left:35.7px;top:635.0px;font-size:14.00px;color:#1a1a1a;font-weight:normal;font-family:'Liberation Sans';transform:scaleX(1.0814);transform-origin:0 0;">Order</div>
<div class="t" style="left:357.5px;top:635.0px;font-size:14.00px;color:#1a1a1a;font-weight:normal;font-family:'Liberation Sans';transform:scaleX(1.0755);transform-origin:0 0;">Time</div>
<div class="t" style="left:464.3px;top:635.0px;font-size:14.00px;color:#1a1a1a;font-weight:normal;font-family:'Liberation Sans';transform:scaleX(1.0431);transform-origin:0 0;">Type</div>
<div class="t" style="left:552.0px;top:635.0px;font-size:14.00px;color:#1a1a1a;font-weight:normal;font-family:'Liberation Sans';transform:scaleX(1.0301);transform-origin:0 0;">Size</div>
<div class="t" style="left:634.2px;top:635.0px;font-size:14.00px;color:#1a1a1a;font-weight:normal;font-family:'Liberation Sans';transform:scaleX(1.0841);transform-origin:0 0;">Symbol</div>
<div class="t" style="left:757.0px;top:635.0px;font-size:14.00px;color:#1a1a1a;font-weight:normal;font-family:'Liberation Sans';transform:scaleX(1.0329);transform-origin:0 0;">Price</div>
<div class="t" style="left:865.0px;top:635.0px;font-size:14.00px;color:#1a1a1a;font-weight:normal;font-family:'Liberation Sans';transform:scaleX(1.0225);transform-origin:0 0;">S / L</div>
<div class="t" style="left:969.3px;top:635.0px;font-size:14.00px;color:#1a1a1a;font-weight:normal;font-family:'Liberation Sans';transform:scaleX(1.0286);transform-origin:0 0;">T / P</div>
<div class="t" style="left:1176.9px;top:635.0px;font-size:14.00px;color:#1a1a1a;font-weight:normal;font-family:'Liberation Sans';transform:scaleX(1.0959);transform-origin:0 0;">Time</div>
<div class="t" style="left:1303.2px;top:635.0px;font-size:14.00px;color:#1a1a1a;font-weight:normal;font-family:'Liberation Sans';transform:scaleX(1.0264);transform-origin:0 0;">Price</div>
<div class="t" style="left:1404.4px;top:635.0px;font-size:14.00px;color:#1a1a1a;font-weight:normal;font-family:'Liberation Sans';transform:scaleX(1.0527);transform-origin:0 0;">Swap</div>
<div class="t" style="left:1519.2px;top:635.0px;font-size:14.00px;color:#1a1a1a;font-weight:normal;font-family:'Liberation Sans';transform:scaleX(1.1309);transform-origin:0 0;">Profit</div>
<div class="t" style="left:1810.2px;top:635.0px;font-size:14.00px;color:#1a1a1a;font-weight:normal;font-family:'Liberation Sans';transform:scaleX(1.0878);transform-origin:0 0;">Comment</div>
<svg style="left:1223px;top:637px" width="8" height="8"><path d="M0.5 0.5 L6.5 0.5 L3.5 6.5 Z" fill="none" stroke="#606060" stroke-width="0.9"/></svg>
<div style="left:30px;top:654px;width:1852px;height:26px;background:#fff;border-bottom:1px solid #cdcdcd"></div>
<div style="left:164px;top:654px;width:1px;height:25px;background:#d8d8d8"></div>
<div style="left:395px;top:654px;width:1px;height:25px;background:#d8d8d8"></div>
<div style="left:499px;top:654px;width:1px;height:25px;background:#d8d8d8"></div>
<div style="left:584px;top:654px;width:1px;height:25px;background:#d8d8d8"></div>
<div style="left:689px;top:654px;width:1px;height:25px;background:#d8d8d8"></div>
<div style="left:794px;top:654px;width:1px;height:25px;background:#d8d8d8"></div>
<div style="left:899px;top:654px;width:1px;height:25px;background:#d8d8d8"></div>
<div style="left:1004px;top:654px;width:1px;height:25px;background:#d8d8d8"></div>
<div style="left:1235px;top:654px;width:1px;height:25px;background:#d8d8d8"></div>
<div style="left:1340px;top:654px;width:1px;height:25px;background:#d8d8d8"></div>
<div style="left:1446px;top:654px;width:1px;height:25px;background:#d8d8d8"></div>
<div style="left:1561px;top:654px;width:1px;height:25px;background:#d8d8d8"></div>
<svg style="left:32px;top:657px" width="22" height="22"><path d="M1.8 1.5 H11.5 L15.5 5.5 V17.5 H1.8 Z" fill="#f4f4f4" stroke="#707070" stroke-width="1.4" stroke-linejoin="round"/><path d="M11.5 1.5 V5.5 H15.5" fill="none" stroke="#404040" stroke-width="1.3"/><circle cx="15" cy="15.6" r="4.3" fill="#f04818" stroke="#a83010" stroke-width="1.1"/></svg>
<div class="t" style="left:57.6px;top:659.0px;font-size:15.00px;color:#101010;font-weight:normal;transform:scaleX(0.9300);transform-origin:0 0;">108122854</div>
<div class="t" style="right:1525.8px;top:659.0px;font-size:15.00px;color:#101010;font-weight:normal;transform:scaleX(0.9300);transform-origin:100% 0;">2025.07.22 02:50:28</div>
<div class="t" style="right:1421.8px;top:659.0px;font-size:15.00px;color:#101010;font-weight:normal;transform:scaleX(0.9300);transform-origin:100% 0;">sell</div>
<div class="t" style="right:1336.8px;top:659.0px;font-size:15.00px;color:#101010;font-weight:normal;transform:scaleX(0.9300);transform-origin:100% 0;">0.07</div>
<div class="t" style="right:1231.8px;top:659.0px;font-size:15.00px;color:#101010;font-weight:normal;transform:scaleX(0.9300);transform-origin:100% 0;">euraudc</div>
<div class="t" style="right:1126.8px;top:659.0px;font-size:15.00px;color:#101010;font-weight:normal;transform:scaleX(0.9300);transform-origin:100% 0;">1.79157</div>
<div class="t" style="right:1021.8px;top:659.0px;font-size:15.00px;color:#101010;font-weight:normal;transform:scaleX(0.9300);transform-origin:100% 0;">0.00000</div>
<div class="t" style="right:916.8px;top:659.0px;font-size:15.00px;color:#101010;font-weight:normal;transform:scaleX(0.9300);transform-origin:100% 0;">0.00000</div>
<div class="t" style="right:685.8px;top:659.0px;font-size:15.00px;color:#101010;font-weight:normal;transform:scaleX(0.9300);transform-origin:100% 0;">2025.07.22 04:43:44</div>
<div class="t" style="right:580.8px;top:659.0px;font-size:15.00px;color:#101010;font-weight:normal;transform:scaleX(0.9300);transform-origin:100% 0;">1.79310</div>
<div class="t" style="right:474.8px;top:659.0px;font-size:15.00px;color:#101010;font-weight:normal;transform:scaleX(0.9300);transform-origin:100% 0;">0.00</div>
<div class="t" style="right:359.8px;top:659.0px;font-size:15.00px;color:#101010;font-weight:normal;transform:scaleX(0.9300);transform-origin:100% 0;">-6.98</div>
<div class="t" style="right:40.8px;top:659.0px;font-size:15.00px;color:#101010;font-weight:normal;transform:scaleX(0.8600);transform-origin:100% 0;">530_2_0_2_0_0_1</div>
<div style="left:30px;top:679px;width:1852px;height:26px;background:#ebebeb;border-bottom:1px solid #cdcdcd"></div>
<div style="left:164px;top:679px;width:1px;height:25px;background:#d8d8d8"></div>
<div style="left:395px;top:679px;width:1px;height:25px;background:#d8d8d8"></div>
<div style="left:499px;top:679px;width:1px;height:25px;background:#d8d8d8"></div>
<div style="left:584px;top:679px;width:1px;height:25px;background:#d8d8d8"></div>
<div style="left:689px;top:679px;width:1px;height:25px;background:#d8d8d8"></div>
<div style="left:794px;top:679px;width:1px;height:25px;background:#d8d8d8"></div>
<div style="left:899px;top:679px;width:1px;height:25px;background:#d8d8d8"></div>
<div style="left:1004px;top:679px;width:1px;height:25px;background:#d8d8d8"></div>
<div style="left:1235px;top:679px;width:1px;height:25px;background:#d8d8d8"></div>
<div style="left:1340px;top:679px;width:1px;height:25px;background:#d8d8d8"></div>
<div style="left:1446px;top:679px;width:1px;height:25px;background:#d8d8d8"></div>
<div style="left:1561px;top:679px;width:1px;height:25px;background:#d8d8d8"></div>
<svg style="left:32px;top:682px" width="22" height="22"><path d="M1.8 1.5 H11.5 L15.5 5.5 V17.5 H1.8 Z" fill="#f4f4f4" stroke="#707070" stroke-width="1.4" stroke-linejoin="round"/><path d="M11.5 1.5 V5.5 H15.5" fill="none" stroke="#404040" stroke-width="1.3"/><circle cx="15" cy="15.6" r="4.3" fill="#20a0f0" stroke="#1a5a98" stroke-width="1.1"/></svg>
<div class="t" style="left:57.6px;top:684.0px;font-size:15.00px;color:#101010;font-weight:normal;transform:scaleX(0.9300);transform-origin:0 0;">108118700</div>
<div class="t" style="right:1525.8px;top:684.0px;font-size:15.00px;color:#101010;font-weight:normal;transform:scaleX(0.9300);transform-origin:100% 0;">2025.07.22 01:47:25</div>
<div class="t" style="right:1421.8px;top:684.0px;font-size:15.00px;color:#101010;font-weight:normal;transform:scaleX(0.9300);transform-origin:100% 0;">buy</div>
<div class="t" style="right:1336.8px;top:684.0px;font-size:15.00px;color:#101010;font-weight:normal;transform:scaleX(0.9300);transform-origin:100% 0;">0.08</div>
<div class="t" style="right:1231.8px;top:684.0px;font-size:15.00px;color:#101010;font-weight:normal;transform:scaleX(0.9300);transform-origin:100% 0;">euraudc</div>
<div class="t" style="right:1126.8px;top:684.0px;font-size:15.00px;color:#101010;font-weight:normal;transform:scaleX(0.9300);transform-origin:100% 0;">1.79397</div>
<div class="t" style="right:1021.8px;top:684.0px;font-size:15.00px;color:#101010;font-weight:normal;transform:scaleX(0.9300);transform-origin:100% 0;">0.00000</div>
<div class="t" style="right:916.8px;top:684.0px;font-size:15.00px;color:#101010;font-weight:normal;transform:scaleX(0.9300);transform-origin:100% 0;">0.00000</div>
<div class="t" style="right:685.8px;top:684.0px;font-size:15.00px;color:#101010;font-weight:normal;transform:scaleX(0.9300);transform-origin:100% 0;">2025.07.22 04:43:44</div>
<div class="t" style="right:580.8px;top:684.0px;font-size:15.00px;color:#101010;font-weight:normal;transform:scaleX(0.9300);transform-origin:100% 0;">1.79277</div>
<div class="t" style="right:474.8px;top:684.0px;font-size:15.00px;color:#101010;font-weight:normal;transform:scaleX(0.9300);transform-origin:100% 0;">0.00</div>
<div class="t" style="right:359.8px;top:684.0px;font-size:15.00px;color:#101010;font-weight:normal;transform:scaleX(0.9300);transform-origin:100% 0;">-6.26</div>
<div class="t" style="right:40.8px;top:684.0px;font-size:15.00px;color:#101010;font-weight:normal;transform:scaleX(0.8600);transform-origin:100% 0;">313_2_0_2_0_0_1</div>
<div style="left:30px;top:704px;width:1852px;height:26px;background:#fff;border-bottom:1px solid #cdcdcd"></div>
<div style="left:164px;top:704px;width:1px;height:25px;background:#d8d8d8"></div>
<div style="left:395px;top:704px;width:1px;height:25px;background:#d8d8d8"></div>
<div style="left:499px;top:704px;width:1px;height:25px;background:#d8d8d8"></div>
<div style="left:584px;top:704px;width:1px;height:25px;background:#d8d8d8"></div>
<div style="left:689px;top:704px;width:1px;height:25px;background:#d8d8d8"></div>
<div style="left:794px;top:704px;width:1px;height:25px;background:#d8d8d8"></div>
<div style="left:899px;top:704px;width:1px;height:25px;background:#d8d8d8"></div>
<div style="left:1004px;top:704px;width:1px;height:25px;background:#d8d8d8"></div>
<div style="left:1235px;top:704px;width:1px;height:25px;background:#d8d8d8"></div>
<div style="left:1340px;top:704px;width:1px;height:25px;background:#d8d8d8"></div>
<div style="left:1446px;top:704px;width:1px;height:25px;background:#d8d8d8"></div>
<div style="left:1561px;top:704px;width:1px;height:25px;background:#d8d8d8"></div>
<svg style="left:32px;top:707px" width="22" height="22"><path d="M1.8 1.5 H11.5 L15.5 5.5 V17.5 H1.8 Z" fill="#f4f4f4" stroke="#707070" stroke-width="1.4" stroke-linejoin="round"/><path d="M11.5 1.5 V5.5 H15.5" fill="none" stroke="#404040" stroke-width="1.3"/><circle cx="15" cy="15.6" r="4.3" fill="#f04818" stroke="#a83010" stroke-width="1.1"/></svg>
<div class="t" style="left:57.6px;top:709.0px;font-size:15.00px;color:#101010;font-weight:normal;transform:scaleX(0.9300);transform-origin:0 0;">108124128</div>
<div class="t" style="right:1525.8px;top:709.0px;font-size:15.00px;color:#101010;font-weight:normal;transform:scaleX(0.9300);transform-origin:100% 0;">2025.07.22 03:16:15</div>
<div class="t" style="right:1421.8px;top:709.0px;font-size:15.00px;color:#101010;font-weight:normal;transform:scaleX(0.9300);transform-origin:100% 0;">sell</div>
<div class="t" style="right:1336.8px;top:709.0px;font-size:15.00px;color:#101010;font-weight:normal;transform:scaleX(0.9300);transform-origin:100% 0;">0.07</div>
<div class="t" style="right:1231.8px;top:709.0px;font-size:15.00px;color:#101010;font-weight:normal;transform:scaleX(0.9300);transform-origin:100% 0;">euraudc</div>
<div class="t" style="right:1126.8px;top:709.0px;font-size:15.00px;color:#101010;font-weight:normal;transform:scaleX(0.9300);transform-origin:100% 0;">1.79148</div>
<div class="t" style="right:1021.8px;top:709.0px;font-size:15.00px;color:#101010;font-weight:normal;transform:scaleX(0.9300);transform-origin:100% 0;">0.00000</div>
<div class="t" style="right:916.8px;top:709.0px;font-size:15.00px;color:#101010;font-weight:normal;transform:scaleX(0.9300);transform-origin:100% 0;">0.00000</div>
<div class="t" style="right:685.8px;top:709.0px;font-size:15.00px;color:#101010;font-weight:normal;transform:scaleX(0.9300);transform-origin:100% 0;">2025.07.22 04:43:43</div>
<div class="t" style="right:580.8px;top:709.0px;font-size:15.00px;color:#101010;font-weight:normal;transform:scaleX(0.9300);transform-origin:100% 0;">1.79310</div>
<div class="t" style="right:474.8px;top:709.0px;font-size:15.00px;color:#101010;font-weight:normal;transform:scaleX(0.9300);transform-origin:100% 0;">0.00</div>
<div class="t" style="right:359.8px;top:709.0px;font-size:15.00px;color:#101010;font-weight:normal;transform:scaleX(0.9300);transform-origin:100% 0;">-7.39</div>
<div class="t" style="right:40.8px;top:709.0px;font-size:15.00px;color:#101010;font-weight:normal;transform:scaleX(0.8600);transform-origin:100% 0;">829_0_0_2_0_0_1</div>
<div style="left:30px;top:729px;width:1852px;height:26px;background:#ebebeb;border-bottom:1px solid #cdcdcd"></div>
<div style="left:164px;top:729px;width:1px;height:25px;background:#d8d8d8"></div>
<div style="left:395px;top:729px;width:1px;height:25px;background:#d8d8d8"></div>
<div style="left:499px;top:729px;width:1px;height:25px;background:#d8d8d8"></div>
<div style="left:584px;top:729px;width:1px;height:25px;background:#d8d8d8"></div>
<div style="left:689px;top:729px;width:1px;height:25px;background:#d8d8d8"></div>
<div style="left:794px;top:729px;width:1px;height:25px;background:#d8d8d8"></div>
<div style="left:899px;top:729px;width:1px;height:25px;background:#d8d8d8"></div>
<div style="left:1004px;top:729px;width:1px;height:25px;background:#d8d8d8"></div>
<div style="left:1235px;top:729px;width:1px;height:25px;background:#d8d8d8"></div>
<div style="left:1340px;top:729px;width:1px;height:25px;background:#d8d8d8"></div>
<div style="left:1446px;top:729px;width:1px;height:25px;background:#d8d8d8"></div>
<div style="left:1561px;top:729px;width:1px;height:25px;background:#d8d8d8"></div>
<svg style="left:32px;top:732px" width="22" height="22"><path d="M1.8 1.5 H11.5 L15.5 5.5 V17.5 H1.8 Z" fill="#f4f4f4" stroke="#707070" stroke-width="1.4" stroke-linejoin="round"/><path d="M11.5 1.5 V5.5 H15.5" fill="none" stroke="#404040" stroke-width="1.3"/><circle cx="15" cy="15.6" r="4.3" fill="#f04818" stroke="#a83010" stroke-width="1.1"/></svg>
<div class="t" style="left:57.6px;top:734.0px;font-size:15.00px;color:#101010;font-weight:normal;transform:scaleX(0.9300);transform-origin:0 0;">108123093</div>
<div class="t" style="right:1525.8px;top:734.0px;font-size:15.00px;color:#101010;font-weight:normal;transform:scaleX(0.9300);transform-origin:100% 0;">2025.07.22 02:58:27</div>
<div class="t" style="right:1421.8px;top:734.0px;font-size:15.00px;color:#101010;font-weight:normal;transform:scaleX(0.9300);transform-origin:100% 0;">sell</div>
<div class="t" style="right:1336.8px;top:734.0px;font-size:15.00px;color:#101010;font-weight:normal;transform:scaleX(0.9300);transform-origin:100% 0;">0.07</div>
<div class="t" style="right:1231.8px;top:734.0px;font-size:15.00px;color:#101010;font-weight:normal;transform:scaleX(0.9300);transform-origin:100% 0;">euraudc</div>
<div class="t" style="right:1126.8px;top:734.0px;font-size:15.00px;color:#101010;font-weight:normal;transform:scaleX(0.9300);transform-origin:100% 0;">1.79154</div>
<div class="t" style="right:1021.8px;top:734.0px;font-size:15.00px;color:#101010;font-weight:normal;transform:scaleX(0.9300);transform-origin:100% 0;">0.00000</div>
<div class="t" style="right:916.8px;top:734.0px;font-size:15.00px;color:#101010;font-weight:normal;transform:scaleX(0.9300);transform-origin:100% 0;">0.00000</div>
<div class="t" style="right:685.8px;top:734.0px;font-size:15.00px;color:#101010;font-weight:normal;transform:scaleX(0.9300);transform-origin:100% 0;">2025.07.22 04:43:43</div>
<div class="t" style="right:580.8px;top:734.0px;font-size:15.00px;color:#101010;font-weight:normal;transform:scaleX(0.9300);transform-origin:100% 0;">1.79310</div>
<div class="t" style="right:474.8px;top:734.0px;font-size:15.00px;color:#101010;font-weight:normal;transform:scaleX(0.9300);transform-origin:100% 0;">0.00</div>
<div class="t" style="right:359.8px;top:734.0px;font-size:15.00px;color:#101010;font-weight:normal;transform:scaleX(0.9300);transform-origin:100% 0;">-7.12</div>
<div class="t" style="right:40.8px;top:734.0px;font-size:15.00px;color:#101010;font-weight:normal;transform:scaleX(0.8600);transform-origin:100% 0;">665_2_0_2_0_0_1</div>
<div style="left:30px;top:754px;width:1852px;height:26px;background:#fff;border-bottom:1px solid #cdcdcd"></div>
<div style="left:164px;top:754px;width:1px;height:25px;background:#d8d8d8"></div>
<div style="left:395px;top:754px;width:1px;height:25px;background:#d8d8d8"></div>
<div style="left:499px;top:754px;width:1px;height:25px;background:#d8d8d8"></div>
<div style="left:584px;top:754px;width:1px;height:25px;background:#d8d8d8"></div>
<div style="left:689px;top:754px;width:1px;height:25px;background:#d8d8d8"></div>
<div style="left:794px;top:754px;width:1px;height:25px;background:#d8d8d8"></div>
<div style="left:899px;top:754px;width:1px;height:25px;background:#d8d8d8"></div>
<div style="left:1004px;top:754px;width:1px;height:25px;background:#d8d8d8"></div>
<div style="left:1235px;top:754px;width:1px;height:25px;background:#d8d8d8"></div>
<div style="left:1340px;top:754px;width:1px;height:25px;background:#d8d8d8"></div>
<div style="left:1446px;top:754px;width:1px;height:25px;background:#d8d8d8"></div>
<div style="left:1561px;top:754px;width:1px;height:25px;background:#d8d8d8"></div>
<svg style="left:32px;top:757px" width="22" height="22"><path d="M1.8 1.5 H11.5 L15.5 5.5 V17.5 H1.8 Z" fill="#f4f4f4" stroke="#707070" stroke-width="1.4" stroke-linejoin="round"/><path d="M11.5 1.5 V5.5 H15.5" fill="none" stroke="#404040" stroke-width="1.3"/><circle cx="15" cy="15.6" r="4.3" fill="#f04818" stroke="#a83010" stroke-width="1.1"/></svg>
<div class="t" style="left:57.6px;top:759.0px;font-size:15.00px;color:#101010;font-weight:normal;transform:scaleX(0.9300);transform-origin:0 0;">108123609</div>
<div class="t" style="right:1525.8px;top:759.0px;font-size:15.00px;color:#101010;font-weight:normal;transform:scaleX(0.9300);transform-origin:100% 0;">2025.07.22 03:06:32</div>
<div class="t" style="right:1421.8px;top:759.0px;font-size:15.00px;color:#101010;font-weight:normal;transform:scaleX(0.9300);transform-origin:100% 0;">sell</div>
<div class="t" style="right:1336.8px;top:759.0px;font-size:15.00px;color:#101010;font-weight:normal;transform:scaleX(0.9300);transform-origin:100% 0;">0.07</div>
<div class="t" style="right:1231.8px;top:759.0px;font-size:15.00px;color:#101010;font-weight:normal;transform:scaleX(0.9300);transform-origin:100% 0;">euraudc</div>
<div class="t" style="right:1126.8px;top:759.0px;font-size:15.00px;color:#101010;font-weight:normal;transform:scaleX(0.9300);transform-origin:100% 0;">1.79146</div>
<div class="t" style="right:1021.8px;top:759.0px;font-size:15.00px;color:#101010;font-weight:normal;transform:scaleX(0.9300);transform-origin:100% 0;">0.00000</div>
<div class="t" style="right:916.8px;top:759.0px;font-size:15.00px;color:#101010;font-weight:normal;transform:scaleX(0.9300);transform-origin:100% 0;">0.00000</div>
<div class="t" style="right:685.8px;top:759.0px;font-size:15.00px;color:#101010;font-weight:normal;transform:scaleX(0.9300);transform-origin:100% 0;">2025.07.22 04:43:43</div>
<div class="t" style="right:580.8px;top:759.0px;font-size:15.00px;color:#101010;font-weight:normal;transform:scaleX(0.9300);transform-origin:100% 0;">1.79310</div>
<div class="t" style="right:474.8px;top:759.0px;font-size:15.00px;color:#101010;font-weight:normal;transform:scaleX(0.9300);transform-origin:100% 0;">0.00</div>
<div class="t" style="right:359.8px;top:759.0px;font-size:15.00px;color:#101010;font-weight:normal;transform:scaleX(0.9300);transform-origin:100% 0;">-7.48</div>
<div class="t" style="right:40.8px;top:759.0px;font-size:15.00px;color:#101010;font-weight:normal;transform:scaleX(0.8600);transform-origin:100% 0;">557_2_0_2_0_0_1</div>
<div style="left:30px;top:779px;width:1852px;height:26px;background:#ebebeb;border-bottom:1px solid #cdcdcd"></div>
<div style="left:164px;top:779px;width:1px;height:25px;background:#d8d8d8"></div>
<div style="left:395px;top:779px;width:1px;height:25px;background:#d8d8d8"></div>
<div style="left:499px;top:779px;width:1px;height:25px;background:#d8d8d8"></div>
<div style="left:584px;top:779px;width:1px;height:25px;background:#d8d8d8"></div>
<div style="left:689px;top:779px;width:1px;height:25px;background:#d8d8d8"></div>
<div style="left:794px;top:779px;width:1px;height:25px;background:#d8d8d8"></div>
<div style="left:899px;top:779px;width:1px;height:25px;background:#d8d8d8"></div>
<div style="left:1004px;top:779px;width:1px;height:25px;background:#d8d8d8"></div>
<div style="left:1235px;top:779px;width:1px;height:25px;background:#d8d8d8"></div>
<div style="left:1340px;top:779px;width:1px;height:25px;background:#d8d8d8"></div>
<div style="left:1446px;top:779px;width:1px;height:25px;background:#d8d8d8"></div>
<div style="left:1561px;top:779px;width:1px;height:25px;background:#d8d8d8"></div>
<svg style="left:32px;top:782px" width="22" height="22"><path d="M1.8 1.5 H11.5 L15.5 5.5 V17.5 H1.8 Z" fill="#f4f4f4" stroke="#707070" stroke-width="1.4" stroke-linejoin="round"/><path d="M11.5 1.5 V5.5 H15.5" fill="none" stroke="#404040" stroke-width="1.3"/><circle cx="15" cy="15.6" r="4.3" fill="#f04818" stroke="#a83010" stroke-width="1.1"/></svg>
<div class="t" style="left:57.6px;top:784.0px;font-size:15.00px;color:#101010;font-weight:normal;transform:scaleX(0.9300);transform-origin:0 0;">108122853</div>
<div class="t" style="right:1525.8px;top:784.0px;font-size:15.00px;color:#101010;font-weight:normal;transform:scaleX(0.9300);transform-origin:100% 0;">2025.07.22 02:50:27</div>
<div class="t" style="right:1421.8px;top:784.0px;font-size:15.00px;color:#101010;font-weight:normal;transform:scaleX(0.9300);transform-origin:100% 0;">sell</div>
<div class="t" style="right:1336.8px;top:784.0px;font-size:15.00px;color:#101010;font-weight:normal;transform:scaleX(0.9300);transform-origin:100% 0;">0.08</div>
<div class="t" style="right:1231.8px;top:784.0px;font-size:15.00px;color:#101010;font-weight:normal;transform:scaleX(0.9300);transform-origin:100% 0;">euraudc</div>
<div class="t" style="right:1126.8px;top:784.0px;font-size:15.00px;color:#101010;font-weight:normal;transform:scaleX(0.9300);transform-origin:100% 0;">1.79157</div>
<div class="t" style="right:1021.8px;top:784.0px;font-size:15.00px;color:#101010;font-weight:normal;transform:scaleX(0.9300);transform-origin:100% 0;">0.00000</div>
<div class="t" style="right:916.8px;top:784.0px;font-size:15.00px;color:#101010;font-weight:normal;transform:scaleX(0.9300);transform-origin:100% 0;">0.00000</div>
<div class="t" style="right:685.8px;top:784.0px;font-size:15.00px;color:#101010;font-weight:normal;transform:scaleX(0.9300);transform-origin:100% 0;">2025.07.22 04:43:43</div>
<div class="t" style="right:580.8px;top:784.0px;font-size:15.00px;color:#101010;font-weight:normal;transform:scaleX(0.9300);transform-origin:100% 0;">1.79310</div>
<div class="t" style="right:474.8px;top:784.0px;font-size:15.00px;color:#101010;font-weight:normal;transform:scaleX(0.9300);transform-origin:100% 0;">0.00</div>
<div class="t" style="right:359.8px;top:784.0px;font-size:15.00px;color:#101010;font-weight:normal;transform:scaleX(0.9300);transform-origin:100% 0;">-7.98</div>
<div class="t" style="right:40.8px;top:784.0px;font-size:15.00px;color:#101010;font-weight:normal;transform:scaleX(0.8600);transform-origin:100% 0;">152_4_0_2_0_0_1</div>
<div style="left:30px;top:804px;width:1852px;height:26px;background:#fff;border-bottom:1px solid #cdcdcd"></div>
<div style="left:164px;top:804px;width:1px;height:25px;background:#d8d8d8"></div>
<div style="left:395px;top:804px;width:1px;height:25px;background:#d8d8d8"></div>
<div style="left:499px;top:804px;width:1px;height:25px;background:#d8d8d8"></div>
<div style="left:584px;top:804px;width:1px;height:25px;background:#d8d8d8"></div>
<div style="left:689px;top:804px;width:1px;height:25px;background:#d8d8d8"></div>
<div style="left:794px;top:804px;width:1px;height:25px;background:#d8d8d8"></div>
<div style="left:899px;top:804px;width:1px;height:25px;background:#d8d8d8"></div>
<div style="left:1004px;top:804px;width:1px;height:25px;background:#d8d8d8"></div>
<div style="left:1235px;top:804px;width:1px;height:25px;background:#d8d8d8"></div>
<div style="left:1340px;top:804px;width:1px;height:25px;background:#d8d8d8"></div>
<div style="left:1446px;top:804px;width:1px;height:25px;background:#d8d8d8"></div>
<div style="left:1561px;top:804px;width:1px;height:25px;background:#d8d8d8"></div>
<svg style="left:32px;top:807px" width="22" height="22"><path d="M1.8 1.5 H11.5 L15.5 5.5 V17.5 H1.8 Z" fill="#f4f4f4" stroke="#707070" stroke-width="1.4" stroke-linejoin="round"/><path d="M11.5 1.5 V5.5 H15.5" fill="none" stroke="#404040" stroke-width="1.3"/><circle cx="15" cy="15.6" r="4.3" fill="#f04818" stroke="#a83010" stroke-width="1.1"/></svg>
<div class="t" style="left:57.6px;top:809.0px;font-size:15.00px;color:#101010;font-weight:normal;transform:scaleX(0.9300);transform-origin:0 0;">108123655</div>
<div class="t" style="right:1525.8px;top:809.0px;font-size:15.00px;color:#101010;font-weight:normal;transform:scaleX(0.9300);transform-origin:100% 0;">2025.07.22 03:07:36</div>
<div class="t" style="right:1421.8px;top:809.0px;font-size:15.00px;color:#101010;font-weight:normal;transform:scaleX(0.9300);transform-origin:100% 0;">sell</div>
<div class="t" style="right:1336.8px;top:809.0px;font-size:15.00px;color:#101010;font-weight:normal;transform:scaleX(0.9300);transform-origin:100% 0;">0.08</div>
<div class="t" style="right:1231.8px;top:809.0px;font-size:15.00px;color:#101010;font-weight:normal;transform:scaleX(0.9300);transform-origin:100% 0;">euraudc</div>
<div class="t" style="right:1126.8px;top:809.0px;font-size:15.00px;color:#101010;font-weight:normal;transform:scaleX(0.9300);transform-origin:100% 0;">1.79130</div>
<div class="t" style="right:1021.8px;top:809.0px;font-size:15.00px;color:#101010;font-weight:normal;transform:scaleX(0.9300);transform-origin:100% 0;">0.00000</div>
<div class="t" style="right:916.8px;top:809.0px;font-size:15.00px;color:#101010;font-weight:normal;transform:scaleX(0.9300);transform-origin:100% 0;">0.00000</div>
<div class="t" style="right:685.8px;top:809.0px;font-size:15.00px;color:#101010;font-weight:normal;transform:scaleX(0.9300);transform-origin:100% 0;">2025.07.22 04:43:42</div>
<div class="t" style="right:580.8px;top:809.0px;font-size:15.00px;color:#101010;font-weight:normal;transform:scaleX(0.9300);transform-origin:100% 0;">1.79309</div>
<div class="t" style="right:474.8px;top:809.0px;font-size:15.00px;color:#101010;font-weight:normal;transform:scaleX(0.9300);transform-origin:100% 0;">0.00</div>
<div class="t" style="right:359.8px;top:809.0px;font-size:15.00px;color:#101010;font-weight:normal;transform:scaleX(0.9300);transform-origin:100% 0;">-9.34</div>
<div class="t" style="right:40.8px;top:809.0px;font-size:15.00px;color:#101010;font-weight:normal;transform:scaleX(0.8600);transform-origin:100% 0;">287_4_0_2_0_0_1</div>
<div style="left:30px;top:829px;width:1852px;height:26px;background:#ebebeb;border-bottom:1px solid #cdcdcd"></div>
<div style="left:164px;top:829px;width:1px;height:25px;background:#d8d8d8"></div>
<div style="left:395px;top:829px;width:1px;height:25px;background:#d8d8d8"></div>
<div style="left:499px;top:829px;width:1px;height:25px;background:#d8d8d8"></div>
<div style="left:584px;top:829px;width:1px;height:25px;background:#d8d8d8"></div>
<div style="left:689px;top:829px;width:1px;height:25px;background:#d8d8d8"></div>
<div style="left:794px;top:829px;width:1px;height:25px;background:#d8d8d8"></div>
<div style="left:899px;top:829px;width:1px;height:25px;background:#d8d8d8"></div>
<div style="left:1004px;top:829px;width:1px;height:25px;background:#d8d8d8"></div>
<div style="left:1235px;top:829px;width:1px;height:25px;background:#d8d8d8"></div>
<div style="left:1340px;top:829px;width:1px;height:25px;background:#d8d8d8"></div>
<div style="left:1446px;top:829px;width:1px;height:25px;background:#d8d8d8"></div>
<div style="left:1561px;top:829px;width:1px;height:25px;background:#d8d8d8"></div>
<svg style="left:32px;top:832px" width="22" height="22"><path d="M1.8 1.5 H11.5 L15.5 5.5 V17.5 H1.8 Z" fill="#f4f4f4" stroke="#707070" stroke-width="1.4" stroke-linejoin="round"/><path d="M11.5 1.5 V5.5 H15.5" fill="none" stroke="#404040" stroke-width="1.3"/><circle cx="15" cy="15.6" r="4.3" fill="#f04818" stroke="#a83010" stroke-width="1.1"/></svg>
<div class="t" style="left:57.6px;top:834.0px;font-size:15.00px;color:#101010;font-weight:normal;transform:scaleX(0.9300);transform-origin:0 0;">108123764</div>
<div class="t" style="right:1525.8px;top:834.0px;font-size:15.00px;color:#101010;font-weight:normal;transform:scaleX(0.9300);transform-origin:100% 0;">2025.07.22 03:11:13</div>
<div class="t" style="right:1421.8px;top:834.0px;font-size:15.00px;color:#101010;font-weight:normal;transform:scaleX(0.9300);transform-origin:100% 0;">sell</div>
<div class="t" style="right:1336.8px;top:834.0px;font-size:15.00px;color:#101010;font-weight:normal;transform:scaleX(0.9300);transform-origin:100% 0;">0.07</div>
<div class="t" style="right:1231.8px;top:834.0px;font-size:15.00px;color:#101010;font-weight:normal;transform:scaleX(0.9300);transform-origin:100% 0;">euraudc</div>
<div class="t" style="right:1126.8px;top:834.0px;font-size:15.00px;color:#101010;font-weight:normal;transform:scaleX(0.9300);transform-origin:100% 0;">1.79131</div>
<div class="t" style="right:1021.8px;top:834.0px;font-size:15.00px;color:#101010;font-weight:normal;transform:scaleX(0.9300);transform-origin:100% 0;">0.00000</div>
<div class="t" style="right:916.8px;top:834.0px;font-size:15.00px;color:#101010;font-weight:normal;transform:scaleX(0.9300);transform-origin:100% 0;">0.00000</div>
<div class="t" style="right:685.8px;top:834.0px;font-size:15.00px;color:#101010;font-weight:normal;transform:scaleX(0.9300);transform-origin:100% 0;">2025.07.22 04:43:42</div>
<div class="t" style="right:580.8px;top:834.0px;font-size:15.00px;color:#101010;font-weight:normal;transform:scaleX(0.9300);transform-origin:100% 0;">1.79310</div>
<div class="t" style="right:474.8px;top:834.0px;font-size:15.00px;color:#101010;font-weight:normal;transform:scaleX(0.9300);transform-origin:100% 0;">0.00</div>
<div class="t" style="right:359.8px;top:834.0px;font-size:15.00px;color:#101010;font-weight:normal;transform:scaleX(0.9300);transform-origin:100% 0;">-8.17</div>
<div class="t" style="right:40.8px;top:834.0px;font-size:15.00px;color:#101010;font-weight:normal;transform:scaleX(0.8600);transform-origin:100% 0;">802_0_0_2_0_0_1</div>
<div style="left:30px;top:854px;width:1852px;height:26px;background:#fff;border-bottom:1px solid #cdcdcd"></div>
<div style="left:164px;top:854px;width:1px;height:25px;background:#d8d8d8"></div>
<div style="left:395px;top:854px;width:1px;height:25px;background:#d8d8d8"></div>
<div style="left:499px;top:854px;width:1px;height:25px;background:#d8d8d8"></div>
<div style="left:584px;top:854px;width:1px;height:25px;background:#d8d8d8"></div>
<div style="left:689px;top:854px;width:1px;height:25px;background:#d8d8d8"></div>
<div style="left:794px;top:854px;width:1px;height:25px;background:#d8d8d8"></div>
<div style="left:899px;top:854px;width:1px;height:25px;background:#d8d8d8"></div>
<div style="left:1004px;top:854px;width:1px;height:25px;background:#d8d8d8"></div>
<div style="left:1235px;top:854px;width:1px;height:25px;background:#d8d8d8"></div>
<div style="left:1340px;top:854px;width:1px;height:25px;background:#d8d8d8"></div>
<div style="left:1446px;top:854px;width:1px;height:25px;background:#d8d8d8"></div>
<div style="left:1561px;top:854px;width:1px;height:25px;background:#d8d8d8"></div>
<svg style="left:32px;top:857px" width="22" height="22"><path d="M1.8 1.5 H11.5 L15.5 5.5 V17.5 H1.8 Z" fill="#f4f4f4" stroke="#707070" stroke-width="1.4" stroke-linejoin="round"/><path d="M11.5 1.5 V5.5 H15.5" fill="none" stroke="#404040" stroke-width="1.3"/><circle cx="15" cy="15.6" r="4.3" fill="#f04818" stroke="#a83010" stroke-width="1.1"/></svg>
<div class="t" style="left:57.6px;top:859.0px;font-size:15.00px;color:#101010;font-weight:normal;transform:scaleX(0.9300);transform-origin:0 0;">108123651</div>
<div class="t" style="right:1525.8px;top:859.0px;font-size:15.00px;color:#101010;font-weight:normal;transform:scaleX(0.9300);transform-origin:100% 0;">2025.07.22 03:07:30</div>
<div class="t" style="right:1421.8px;top:859.0px;font-size:15.00px;color:#101010;font-weight:normal;transform:scaleX(0.9300);transform-origin:100% 0;">sell</div>
<div class="t" style="right:1336.8px;top:859.0px;font-size:15.00px;color:#101010;font-weight:normal;transform:scaleX(0.9300);transform-origin:100% 0;">0.08</div>
<div class="t" style="right:1231.8px;top:859.0px;font-size:15.00px;color:#101010;font-weight:normal;transform:scaleX(0.9300);transform-origin:100% 0;">euraudc</div>
<div class="t" style="right:1126.8px;top:859.0px;font-size:15.00px;color:#101010;font-weight:normal;transform:scaleX(0.9300);transform-origin:100% 0;">1.79132</div>
<div class="t" style="right:1021.8px;top:859.0px;font-size:15.00px;color:#101010;font-weight:normal;transform:scaleX(0.9300);transform-origin:100% 0;">0.00000</div>
<div class="t" style="right:916.8px;top:859.0px;font-size:15.00px;color:#101010;font-weight:normal;transform:scaleX(0.9300);transform-origin:100% 0;">0.00000</div>
<div class="t" style="right:685.8px;top:859.0px;font-size:15.00px;color:#101010;font-weight:normal;transform:scaleX(0.9300);transform-origin:100% 0;">2025.07.22 04:43:42</div>
<div class="t" style="right:580.8px;top:859.0px;font-size:15.00px;color:#101010;font-weight:normal;transform:scaleX(0.9300);transform-origin:100% 0;">1.79310</div>
<div class="t" style="right:474.8px;top:859.0px;font-size:15.00px;color:#101010;font-weight:normal;transform:scaleX(0.9300);transform-origin:100% 0;">0.00</div>
<div class="t" style="right:359.8px;top:859.0px;font-size:15.00px;color:#101010;font-weight:normal;transform:scaleX(0.9300);transform-origin:100% 0;">-9.29</div>
<div class="t" style="right:40.8px;top:859.0px;font-size:15.00px;color:#101010;font-weight:normal;transform:scaleX(0.8600);transform-origin:100% 0;">125_4_0_2_0_0_1</div>
<div style="left:30px;top:879px;width:1852px;height:26px;background:#ebebeb;border-bottom:1px solid #cdcdcd"></div>
<div style="left:164px;top:879px;width:1px;height:25px;background:#d8d8d8"></div>
<div style="left:395px;top:879px;width:1px;height:25px;background:#d8d8d8"></div>
<div style="left:499px;top:879px;width:1px;height:25px;background:#d8d8d8"></div>
<div style="left:584px;top:879px;width:1px;height:25px;background:#d8d8d8"></div>
<div style="left:689px;top:879px;width:1px;height:25px;background:#d8d8d8"></div>
<div style="left:794px;top:879px;width:1px;height:25px;background:#d8d8d8"></div>
<div style="left:899px;top:879px;width:1px;height:25px;background:#d8d8d8"></div>
<div style="left:1004px;top:879px;width:1px;height:25px;background:#d8d8d8"></div>
<div style="left:1235px;top:879px;width:1px;height:25px;background:#d8d8d8"></div>
<div style="left:1340px;top:879px;width:1px;height:25px;background:#d8d8d8"></div>
<div style="left:1446px;top:879px;width:1px;height:25px;background:#d8d8d8"></div>
<div style="left:1561px;top:879px;width:1px;height:25px;background:#d8d8d8"></div>
<svg style="left:32px;top:882px" width="22" height="22"><path d="M1.8 1.5 H11.5 L15.5 5.5 V17.5 H1.8 Z" fill="#f4f4f4" stroke="#707070" stroke-width="1.4" stroke-linejoin="round"/><path d="M11.5 1.5 V5.5 H15.5" fill="none" stroke="#404040" stroke-width="1.3"/><circle cx="15" cy="15.6" r="4.3" fill="#f04818" stroke="#a83010" stroke-width="1.1"/></svg>
<div class="t" style="left:57.6px;top:884.0px;font-size:15.00px;color:#101010;font-weight:normal;transform:scaleX(0.9300);transform-origin:0 0;">108123603</div>
<div class="t" style="right:1525.8px;top:884.0px;font-size:15.00px;color:#101010;font-weight:normal;transform:scaleX(0.9300);transform-origin:100% 0;">2025.07.22 03:06:15</div>
<div class="t" style="right:1421.8px;top:884.0px;font-size:15.00px;color:#101010;font-weight:normal;transform:scaleX(0.9300);transform-origin:100% 0;">sell</div>
<div class="t" style="right:1336.8px;top:884.0px;font-size:15.00px;color:#101010;font-weight:normal;transform:scaleX(0.9300);transform-origin:100% 0;">0.07</div>
<div class="t" style="right:1231.8px;top:884.0px;font-size:15.00px;color:#101010;font-weight:normal;transform:scaleX(0.9300);transform-origin:100% 0;">gbpjpyc</div>
<div class="t" style="right:1126.8px;top:884.0px;font-size:15.00px;color:#101010;font-weight:normal;transform:scaleX(0.9300);transform-origin:100% 0;">198.787</div>
<div class="t" style="right:1021.8px;top:884.0px;font-size:15.00px;color:#101010;font-weight:normal;transform:scaleX(0.9300);transform-origin:100% 0;">0.000</div>
<div class="t" style="right:916.8px;top:884.0px;font-size:15.00px;color:#101010;font-weight:normal;transform:scaleX(0.9300);transform-origin:100% 0;">0.000</div>
<div class="t" style="right:685.8px;top:884.0px;font-size:15.00px;color:#101010;font-weight:normal;transform:scaleX(0.9300);transform-origin:100% 0;">2025.07.22 04:43:42</div>
<div class="t" style="right:580.8px;top:884.0px;font-size:15.00px;color:#101010;font-weight:normal;transform:scaleX(0.9300);transform-origin:100% 0;">199.033</div>
<div class="t" style="right:474.8px;top:884.0px;font-size:15.00px;color:#101010;font-weight:normal;transform:scaleX(0.9300);transform-origin:100% 0;">0.00</div>
<div class="t" style="right:359.8px;top:884.0px;font-size:15.00px;color:#101010;font-weight:normal;transform:scaleX(0.9300);transform-origin:100% 0;">-11.66</div>
<div class="t" style="right:40.8px;top:884.0px;font-size:15.00px;color:#101010;font-weight:normal;transform:scaleX(0.8600);transform-origin:100% 0;">780_0_0_2_0_0_1</div>
<div style="left:30px;top:904px;width:1852px;height:26px;background:#fff;border-bottom:1px solid #cdcdcd"></div>
<div style="left:164px;top:904px;width:1px;height:25px;background:#d8d8d8"></div>
<div style="left:395px;top:904px;width:1px;height:25px;background:#d8d8d8"></div>
<div style="left:499px;top:904px;width:1px;height:25px;background:#d8d8d8"></div>
<div style="left:584px;top:904px;width:1px;height:25px;background:#d8d8d8"></div>
<div style="left:689px;top:904px;width:1px;height:25px;background:#d8d8d8"></div>
<div style="left:794px;top:904px;width:1px;height:25px;background:#d8d8d8"></div>
<div style="left:899px;top:904px;width:1px;height:25px;background:#d8d8d8"></div>
<div style="left:1004px;top:904px;width:1px;height:25px;background:#d8d8d8"></div>
<div style="left:1235px;top:904px;width:1px;height:25px;background:#d8d8d8"></div>
<div style="left:1340px;top:904px;width:1px;height:25px;background:#d8d8d8"></div>
<div style="left:1446px;top:904px;width:1px;height:25px;background:#d8d8d8"></div>
<div style="left:1561px;top:904px;width:1px;height:25px;background:#d8d8d8"></div>
<svg style="left:32px;top:907px" width="22" height="22"><path d="M1.8 1.5 H11.5 L15.5 5.5 V17.5 H1.8 Z" fill="#f4f4f4" stroke="#707070" stroke-width="1.4" stroke-linejoin="round"/><path d="M11.5 1.5 V5.5 H15.5" fill="none" stroke="#404040" stroke-width="1.3"/><circle cx="15" cy="15.6" r="4.3" fill="#f04818" stroke="#a83010" stroke-width="1.1"/></svg>
<div class="t" style="left:57.6px;top:909.0px;font-size:15.00px;color:#101010;font-weight:normal;transform:scaleX(0.9300);transform-origin:0 0;">108122872</div>
<div class="t" style="right:1525.8px;top:909.0px;font-size:15.00px;color:#101010;font-weight:normal;transform:scaleX(0.9300);transform-origin:100% 0;">2025.07.22 02:51:15</div>
<div class="t" style="right:1421.8px;top:909.0px;font-size:15.00px;color:#101010;font-weight:normal;transform:scaleX(0.9300);transform-origin:100% 0;">sell</div>
<div class="t" style="right:1336.8px;top:909.0px;font-size:15.00px;color:#101010;font-weight:normal;transform:scaleX(0.9300);transform-origin:100% 0;">0.07</div>
<div class="t" style="right:1231.8px;top:909.0px;font-size:15.00px;color:#101010;font-weight:normal;transform:scaleX(0.9300);transform-origin:100% 0;">gbpjpyc</div>
<div class="t" style="right:1126.8px;top:909.0px;font-size:15.00px;color:#101010;font-weight:normal;transform:scaleX(0.9300);transform-origin:100% 0;">198.773</div>
<div class="t" style="right:1021.8px;top:909.0px;font-size:15.00px;color:#101010;font-weight:normal;transform:scaleX(0.9300);transform-origin:100% 0;">0.000</div>
<div class="t" style="right:916.8px;top:909.0px;font-size:15.00px;color:#101010;font-weight:normal;transform:scaleX(0.9300);transform-origin:100% 0;">0.000</div>
<div class="t" style="right:685.8px;top:909.0px;font-size:15.00px;color:#101010;font-weight:normal;transform:scaleX(0.9300);transform-origin:100% 0;">2025.07.22 04:43:41</div>
<div class="t" style="right:580.8px;top:909.0px;font-size:15.00px;color:#101010;font-weight:normal;transform:scaleX(0.9300);transform-origin:100% 0;">199.033</div>
<div class="t" style="right:474.8px;top:909.0px;font-size:15.00px;color:#101010;font-weight:normal;transform:scaleX(0.9300);transform-origin:100% 0;">0.00</div>
<div class="t" style="right:359.8px;top:909.0px;font-size:15.00px;color:#101010;font-weight:normal;transform:scaleX(0.9300);transform-origin:100% 0;">-12.32</div>
<div class="t" style="right:40.8px;top:909.0px;font-size:15.00px;color:#101010;font-weight:normal;transform:scaleX(0.8600);transform-origin:100% 0;">698_0_0_2_0_0_1</div>
<div style="left:30px;top:929px;width:1852px;height:25px;background:#c8c8c8"></div>
<svg style="left:37px;top:937px" width="12" height="12"><circle cx="5.5" cy="5.5" r="4.5" fill="#d8d8d8" stroke="#888" stroke-width="1.3"/><path d="M3 8 L8 3" stroke="#aaa" stroke-width="1"/></svg>
<div class="t" style="left:56.6px;top:935.0px;font-size:15.14px;color:#101010;font-weight:bold;font-family:'Liberation Sans';transform:scaleX(0.9942);transform-origin:0 0;">Profit/Loss: 606.77&nbsp; Credit: 0.00&nbsp; Deposit: 0.00&nbsp; Withdrawal: 0.00</div>
<div class="t" style="left:1507.9px;top:935.0px;font-size:15.14px;color:#101010;font-weight:bold;font-family:'Liberation Sans';transform:scaleX(1.0432);transform-origin:0 0;">606.77</div>
<div style="left:30px;top:969px;width:1872px;height:1px;background:#000"></div>
<div style="left:1881px;top:628px;width:22px;height:342px;background:#fff;border:1px solid #000"></div>
<div style="left:1882px;top:648px;width:20px;height:1px;background:#000"></div>
<svg style="left:1885px;top:633px" width="16" height="10"><path d="M2 8 L7.5 2.5 L13 8" fill="none" stroke="#000" stroke-width="1.4"/></svg>
<div style="left:1882px;top:927px;width:20px;height:21px;background:#fff;border-top:1px solid #000;border-bottom:1px solid #000"></div>
<div style="left:1886px;top:933px;width:11px;height:2px;background:#000"></div>
<div style="left:1886px;top:937px;width:11px;height:2px;background:#000"></div>
<div style="left:1886px;top:941px;width:11px;height:2px;background:#000"></div>
<svg style="left:1885px;top:953px" width="16" height="10"><path d="M2 2 L7.5 7.5 L13 2" fill="none" stroke="#000" stroke-width="1.4"/></svg>
<div style="left:30px;top:969px;width:1872px;height:1px;background:#000"></div>
<div style="left:180px;top:969px;width:1px;height:24px;background:#000"></div>
<div style="left:309px;top:969px;width:1px;height:24px;background:#000"></div>
<div style="left:180px;top:992px;width:130px;height:2px;background:#000"></div>
<div class="t" style="left:44.3px;top:974.0px;font-size:15.00px;color:#1a1a1a;font-weight:normal;font-family:'Liberation Sans';transform:scaleX(0.9802);transform-origin:0 0;">Trade</div>
<div class="t" style="left:107.7px;top:974.0px;font-size:15.00px;color:#1a1a1a;font-weight:normal;font-family:'Liberation Sans';transform:scaleX(0.9505);transform-origin:0 0;">Exposure</div>
<div class="t" style="left:192.7px;top:974.0px;font-size:15.00px;color:#1a1a1a;font-weight:normal;font-family:'Liberation Sans';transform:scaleX(1.0053);transform-origin:0 0;">Account History</div>
<div class="t" style="left:323.0px;top:974.0px;font-size:15.00px;color:#1a1a1a;font-weight:normal;font-family:'Liberation Sans';transform:scaleX(0.9693);transform-origin:0 0;">News</div>
<div class="t" style="left:384.0px;top:974.0px;font-size:15.00px;color:#1a1a1a;font-weight:normal;font-family:'Liberation Sans';transform:scaleX(0.9907);transform-origin:0 0;">Alerts</div>
<div class="t" style="left:446.8px;top:974.0px;font-size:15.00px;color:#1a1a1a;font-weight:normal;font-family:'Liberation Sans';transform:scaleX(1.0537);transform-origin:0 0;">Mailbox</div>
<div class="t" style="left:542.3px;top:974.0px;font-size:15.00px;color:#1a1a1a;font-weight:normal;font-family:'Liberation Sans';">Company</div>
<div class="t" style="left:630.2px;top:974.0px;font-size:15.00px;color:#1a1a1a;font-weight:normal;font-family:'Liberation Sans';transform:scaleX(1.0237);transform-origin:0 0;">Market</div>
<div class="t" style="left:718.3px;top:974.0px;font-size:15.00px;color:#1a1a1a;font-weight:normal;font-family:'Liberation Sans';transform:scaleX(0.9749);transform-origin:0 0;">Signals</div>
<div class="t" style="left:790.2px;top:974.0px;font-size:15.00px;color:#1a1a1a;font-weight:normal;font-family:'Liberation Sans';transform:scaleX(1.0211);transform-origin:0 0;">Articles</div>
<div class="t" style="left:863.7px;top:974.0px;font-size:15.00px;color:#1a1a1a;font-weight:normal;font-family:'Liberation Sans';transform:scaleX(0.9614);transform-origin:0 0;">Code Base</div>
<div class="t" style="left:959.3px;top:974.0px;font-size:15.00px;color:#1a1a1a;font-weight:normal;font-family:'Liberation Sans';transform:scaleX(0.9605);transform-origin:0 0;">Experts</div>
<div class="t" style="left:1031.7px;top:974.0px;font-size:15.00px;color:#1a1a1a;font-weight:normal;font-family:'Liberation Sans';transform:scaleX(0.9708);transform-origin:0 0;">Journal</div>
<div style="left:96px;top:973px;width:1px;height:19px;background:#000"></div>
<div style="left:371px;top:973px;width:1px;height:19px;background:#000"></div>
<div style="left:435px;top:973px;width:1px;height:19px;background:#000"></div>
<div style="left:530px;top:973px;width:1px;height:19px;background:#000"></div>
<div style="left:618px;top:973px;width:1px;height:19px;background:#000"></div>
<div style="left:707px;top:973px;width:1px;height:19px;background:#000"></div>
<div style="left:778px;top:973px;width:1px;height:19px;background:#000"></div>
<div style="left:852px;top:973px;width:1px;height:19px;background:#000"></div>
<div style="left:947px;top:973px;width:1px;height:19px;background:#000"></div>
<div style="left:1020px;top:973px;width:1px;height:19px;background:#000"></div>
<div style="left:1092px;top:973px;width:1px;height:19px;background:#000"></div>
<div class="t" style="left:503.8px;top:980.0px;font-size:12.14px;color:#d42a3a;font-weight:bold;font-family:'Liberation Sans';transform:scaleX(1.0296);transform-origin:0 0;">83</div>
<div class="t" style="left:679.3px;top:980.0px;font-size:12.14px;color:#d42a3a;font-weight:bold;font-family:'Liberation Sans';transform:scaleX(1.1174);transform-origin:0 0;">99</div>
<div class="t" style="left:10.3px;top:1011.0px;font-size:15.14px;color:#1a1a1a;font-weight:normal;font-family:'Liberation Sans';transform:scaleX(0.9352);transform-origin:0 0;">For Help, press F1</div>
<div style="left:1013px;top:1006px;width:1px;height:23px;background:#a0a0a0"></div>
<div style="left:1162px;top:1006px;width:1px;height:23px;background:#a0a0a0"></div>
<div style="left:1293px;top:1006px;width:1px;height:23px;background:#a0a0a0"></div>
<div style="left:1382px;top:1006px;width:1px;height:23px;background:#a0a0a0"></div>
<div style="left:1471px;top:1006px;width:1px;height:23px;background:#a0a0a0"></div>
<div style="left:1556px;top:1006px;width:1px;height:23px;background:#a0a0a0"></div>
<div style="left:1643px;top:1006px;width:1px;height:23px;background:#a0a0a0"></div>
<div style="left:1727px;top:1006px;width:1px;height:23px;background:#a0a0a0"></div>
<div class="t" style="left:1018.4px;top:1011.0px;font-size:15.14px;color:#1a1a1a;font-weight:normal;font-family:'Liberation Sans';transform:scaleX(1.0083);transform-origin:0 0;">MT4Talk Aligator</div>
<div class="t" style="left:1167.2px;top:1011.0px;font-size:15.14px;color:#1a1a1a;font-weight:normal;font-family:'Liberation Sans';transform:scaleX(0.9360);transform-origin:0 0;">2025.07.23 12:40</div>
<div class="t" style="left:1298.6px;top:1011.0px;font-size:15.14px;color:#1a1a1a;font-weight:normal;font-family:'Liberation Sans';transform:scaleX(0.9181);transform-origin:0 0;">O: 198.245</div>
<div class="t" style="left:1387.3px;top:1011.0px;font-size:15.14px;color:#1a1a1a;font-weight:normal;font-family:'Liberation Sans';transform:scaleX(0.9340);transform-origin:0 0;">H: 198.294</div>
<div class="t" style="left:1476.6px;top:1011.0px;font-size:15.14px;color:#1a1a1a;font-weight:normal;font-family:'Liberation Sans';transform:scaleX(0.9134);transform-origin:0 0;">L: 198.244</div>
<div class="t" style="left:1561.5px;top:1011.0px;font-size:15.14px;color:#1a1a1a;font-weight:normal;font-family:'Liberation Sans';transform:scaleX(0.9162);transform-origin:0 0;">C: 198.288</div>
<div class="t" style="left:1648.2px;top:1011.0px;font-size:15.14px;color:#1a1a1a;font-weight:normal;font-family:'Liberation Sans';transform:scaleX(0.9318);transform-origin:0 0;">V: 263</div>
<div class="t" style="left:1769.0px;top:1011.0px;font-size:15.14px;color:#1a1a1a;font-weight:normal;font-family:'Liberation Sans';transform:scaleX(0.9759);transform-origin:0 0;">30393/192 kb</div>
<div style="left:1733px;top:1009px;width:3px;height:7px;background:#6a8a10"></div>
<div style="left:1733px;top:1022px;width:3px;height:4px;background:#1a4a6a"></div>
<div style="left:1737px;top:1009px;width:3px;height:7px;background:#6a8a10"></div>
<div style="left:1737px;top:1020px;width:3px;height:5px;background:#1a4a6a"></div>
<div style="left:1741px;top:1009px;width:3px;height:7px;background:#6a8a10"></div>
<div style="left:1741px;top:1019px;width:3px;height:6px;background:#1a4a6a"></div>
<div style="left:1745px;top:1009px;width:3px;height:7px;background:#6a8a10"></div>
<div style="left:1745px;top:1018px;width:3px;height:8px;background:#1a4a6a"></div>
<div style="left:1749px;top:1009px;width:3px;height:7px;background:#6a8a10"></div>
<div style="left:1749px;top:1017px;width:3px;height:9px;background:#1a4a6a"></div>
<div style="left:1753px;top:1009px;width:3px;height:7px;background:#6a8a10"></div>
<div style="left:1753px;top:1016px;width:3px;height:10px;background:#1a4a6a"></div>
<div style="left:1757px;top:1009px;width:3px;height:7px;background:#6a8a10"></div>
<div style="left:1757px;top:1014px;width:3px;height:11px;background:#1a4a6a"></div>
<div style="left:1761px;top:1009px;width:3px;height:7px;background:#6a8a10"></div>
<div style="left:1761px;top:1013px;width:3px;height:12px;background:#1a4a6a"></div>
<svg style="left:1892px;top:1014px" width="17" height="17"><path d="M16.5 2 L2.5 16.5 M16.5 5 L5.5 16.5 M16.5 8 L8.5 16.5 M16.5 11 L11.5 16.5 M16.5 14 L14.5 16.5" stroke="#8a8a8a" stroke-width="1"/></svg>
</body></html>
